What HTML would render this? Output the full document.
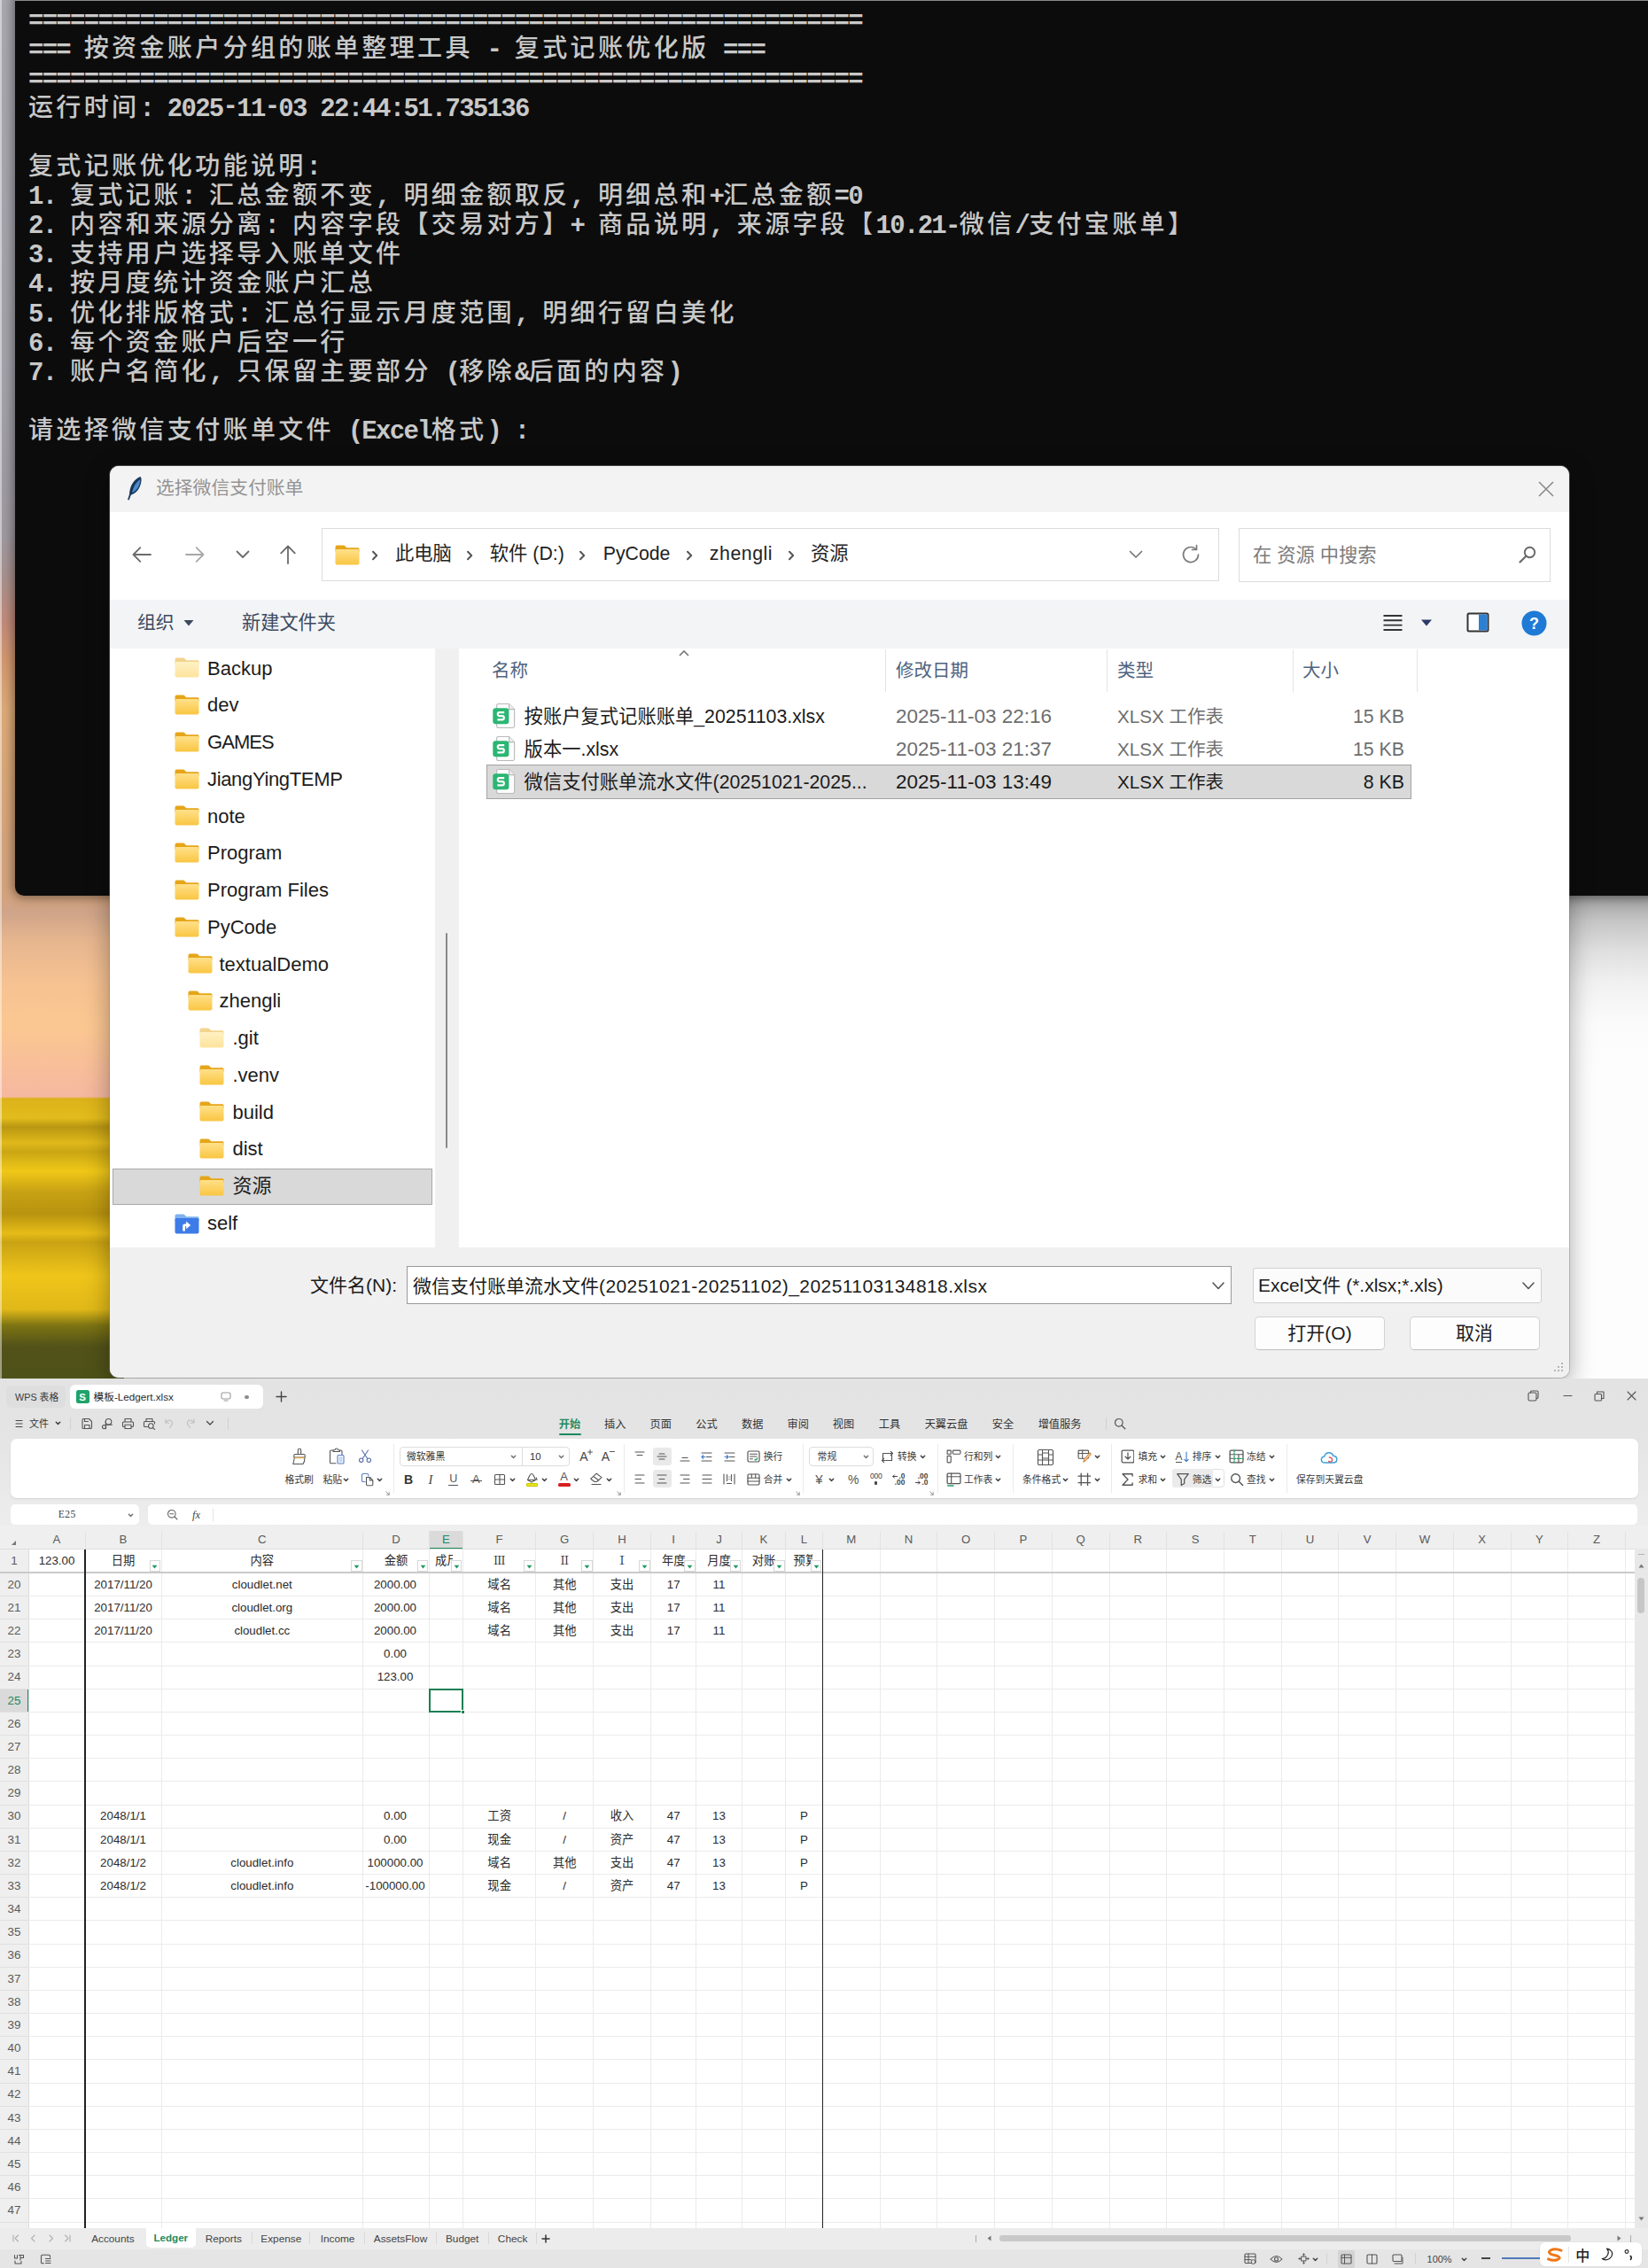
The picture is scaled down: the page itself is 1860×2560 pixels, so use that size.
<!DOCTYPE html><html lang="zh-CN"><head><meta charset="utf-8"><title>screenshot</title><style>
html,body{margin:0;padding:0}body{width:1860px;height:2560px;position:relative;overflow:hidden;background:#fff}

#top{position:absolute;left:0;top:0;width:1860px;height:1556px;overflow:hidden;background:#fdfdfd}
#wall{position:absolute;left:0;top:0;width:140px;height:1557px;
 background:linear-gradient(to bottom,#a9a8b0 0px,#a3a2aa 420px,#9e99a1 600px,#a8918f 650px,#c08a7a 700px,#d29870 745px,#dcaa78 800px,#d9a878 860px,#d4a47c 950px,#d3a37e 1012px,#cfa489 1030px,#e6b68f 1062px,#f6c291 1110px,#fbc791 1160px,#f7bc9b 1215px,#f5b8a0 1238px,#dcb21a 1240px,#e2bc1c 1262px,#b99712 1272px,#e0b91a 1290px,#caa614 1300px,#f0c818 1322px,#c8a214 1345px,#b8940f 1370px,#e6bc18 1392px,#c9a313 1402px,#efc51a 1440px,#e0b818 1478px,#7d7413 1496px,#525219 1520px,#4e5218 1557px)}
#wall:after{content:"";position:absolute;left:0;top:0;width:2px;height:100%;background:rgba(255,255,255,.45)}
#wall2{position:absolute;left:1771px;top:1010px;width:89px;height:547px;background:linear-gradient(to bottom,#9c9c9c 0px,#c6c6c6 30px,#dedede 62px,#f1f1f1 100px,#fbfbfb 145px,#fdfdfd 200px)}
#term{position:absolute;left:17px;top:-10px;width:1853px;height:1021px;background:#0c0c0c;border-radius:10px;box-shadow:0 0 12px 2px rgba(0,0,0,.45)}
.tl{position:absolute;left:32px;height:33px;line-height:33px;white-space:pre;font-family:"Liberation Mono","Noto Sans CJK SC",monospace;font-size:29px;letter-spacing:-1.72px;color:#c8c8c8;font-weight:bold;}
.tl .eq{position:relative;top:0.3px}.tl .hy{position:relative;top:-2.6px}
.tl .tc{font-family:"Noto Sans CJK SC","Liberation Mono",monospace;font-size:28px;letter-spacing:3.36px;font-weight:500;line-height:0;}
#dlg{position:absolute;left:124px;top:526px;width:1647px;height:1029px;background:#fff;border-radius:10px;box-shadow:0 0 0 1px rgba(130,130,130,.4),0 8px 28px rgba(0,0,0,.35);overflow:hidden;font-family:"Liberation Sans","Noto Sans CJK SC",sans-serif;color:#1b1b1b}
#dlg div,#dlg span,#dlg svg{position:absolute}
.dt{white-space:nowrap;line-height:30px;height:30px;font-size:21.5px}


#wps{position:absolute;left:0;top:1556px;width:1860px;height:1004px;background:linear-gradient(to bottom,#e3e3e3 0,#e4e4e4 60px,#ebebeb 140px,#ededed 170px);overflow:hidden;font-family:"Liberation Sans","Noto Sans CJK SC",sans-serif;color:#333}
#wps div,#wps span,#wps svg{position:absolute}
#wps .t{white-space:nowrap;line-height:20px;height:20px;font-size:10.8px;color:#3a3a3a}
#wps .c{white-space:nowrap;line-height:20px;height:20px;font-size:13.3px;color:#2a2a2a;text-align:center}
#wps .rh{white-space:nowrap;line-height:20px;height:20px;font-size:13.4px;color:#5a5a5a;text-align:center;left:0;width:32px}
#wps .ch{white-space:nowrap;line-height:20px;height:20px;font-size:13.2px;color:#5a5a5a;text-align:center}

</style></head><body>

<svg width="0" height="0" style="position:absolute">
<defs>
<linearGradient id="fg1" x1="0" y1="0" x2="0" y2="1"><stop offset="0" stop-color="#ffe08a"/><stop offset="1" stop-color="#f9c642"/></linearGradient>
<linearGradient id="fg2" x1="0" y1="0" x2="0" y2="1"><stop offset="0" stop-color="#fff1c4"/><stop offset="1" stop-color="#fde39c"/></linearGradient>
</defs></svg>

<div id="top">
<div id="wall"></div>
<div id="wall2"></div>
<div id="term"><div style="position:absolute;left:0;top:10px;width:100%;height:1px;background:#8a8a8a"></div>
<div class="tl" style="left:15px;top:17.3px"><span class="eq">============================================================</span></div>
<div class="tl" style="left:15px;top:50.4px"><span class="eq">===</span> <span class="tc">按资金账户分组的账单整理工具</span> - <span class="tc">复式记账优化版</span> <span class="eq">===</span></div>
<div class="tl" style="left:15px;top:83.5px"><span class="eq">============================================================</span></div>
<div class="tl" style="left:15px;top:116.7px"><span class="tc">运行时间</span>: 2025<span class="hy">-</span>11<span class="hy">-</span>03 22:44:51.735136</div>
<div class="tl" style="left:15px;top:182.9px"><span class="tc">复式记账优化功能说明</span>:</div>
<div class="tl" style="left:15px;top:216.0px">1. <span class="tc">复式记账</span>: <span class="tc">汇总金额不变</span>, <span class="tc">明细金额取反</span>, <span class="tc">明细总和</span>+<span class="tc">汇总金额</span><span class="eq">=</span>0</div>
<div class="tl" style="left:15px;top:249.1px">2. <span class="tc">内容和来源分离</span>: <span class="tc">内容字段【交易对方】</span>+ <span class="tc">商品说明</span>, <span class="tc">来源字段【</span>10.21-<span class="tc">微信</span>/<span class="tc">支付宝账单】</span></div>
<div class="tl" style="left:15px;top:282.3px">3. <span class="tc">支持用户选择导入账单文件</span></div>
<div class="tl" style="left:15px;top:315.4px">4. <span class="tc">按月度统计资金账户汇总</span></div>
<div class="tl" style="left:15px;top:348.5px">5. <span class="tc">优化排版格式</span>: <span class="tc">汇总行显示月度范围</span>, <span class="tc">明细行留白美化</span></div>
<div class="tl" style="left:15px;top:381.6px">6. <span class="tc">每个资金账户后空一行</span></div>
<div class="tl" style="left:15px;top:414.7px">7. <span class="tc">账户名简化</span>, <span class="tc">只保留主要部分</span> (<span class="tc">移除</span>&amp;<span class="tc">后面的内容</span>)</div>
<div class="tl" style="left:15px;top:481.0px"><span class="tc">请选择微信支付账单文件</span> (Excel<span class="tc">格式</span>) :</div>
</div>
<div id="dlg"><div style="left:0.0px;top:0.0px;width:1647.0px;height:52.0px;background:#f3f3f3"></div><svg style="left:16.5px;top:9.5px" width="24" height="30" viewBox="0 0 24 30" ><path d="M17.5 2 C10 5 5.5 12 5 22 L3 28 L4.6 28.4 L7 22.5 C13 21 17.5 15 18.5 7 C18.8 4.5 18.3 2.8 17.5 2Z" fill="#1f3d61"/><path d="M16.8 5.2 C12.5 8.5 9.3 13.5 8 20.3 C12.8 18.3 16.3 13.2 17.1 7.3 C17.2 6.3 17.1 5.6 16.8 5.2Z" fill="#4b8acb"/><path d="M16.6 4 C11 8.5 7.6 14.2 6.2 22" stroke="#122a45" stroke-width="1" fill="none"/></svg><span class="dt" style="left:52.0px;top:10.0px;font-size:20.8px;color:#939393">选择微信支付账单</span><svg style="left:1611.0px;top:16.0px" width="20" height="20" viewBox="0 0 20 20" ><path d="M2 2 L18 18 M18 2 L2 18" stroke="#8a8a8a" stroke-width="1.6" fill="none"/></svg><svg style="left:22.0px;top:88.0px" width="28" height="24" viewBox="0 0 28 24" ><path d="M24 12 H4.5 M12.3 4.2 L4.5 12 L12.3 19.8" stroke="#6b6b6b" stroke-width="1.8" fill="none" stroke-linecap="round" stroke-linejoin="round"/></svg><svg style="left:82.0px;top:88.0px" width="28" height="24" viewBox="0 0 28 24" ><path d="M4 12 H23.5 M15.7 4.2 L23.5 12 L15.7 19.8" stroke="#a8a8a8" stroke-width="1.8" fill="none" stroke-linecap="round" stroke-linejoin="round"/></svg><svg style="left:141.0px;top:93.0px" width="18" height="14" viewBox="0 0 18 14" ><path d="M2.5 3.5 L9 10 L15.5 3.5" stroke="#6b6b6b" stroke-width="1.8" fill="none" stroke-linecap="round" stroke-linejoin="round"/></svg><svg style="left:189.0px;top:86.0px" width="24" height="28" viewBox="0 0 24 28" ><path d="M12 24 V4.5 M4.2 12.3 L12 4.5 L19.8 12.3" stroke="#6b6b6b" stroke-width="1.8" fill="none" stroke-linecap="round" stroke-linejoin="round"/></svg><div style="left:239.0px;top:70.0px;width:1013.0px;height:60.0px;box-sizing:border-box;border:1.5px solid #dcdcdc;background:#fff"></div><svg style="left:253.0px;top:87.0px" width="30" height="26" viewBox="0 0 30 26" > <path d="M1.5 4.5 Q1.5 2.6 3.5 2.6 H10.5 Q11.8 2.6 12.6 3.5 L14.2 5.2 H26.5 Q28.5 4.8 28.5 6.8 V10 H1.5Z" fill="#e6a519"/> <path d="M1.5 8.6 Q1.5 7 3.2 7 H26.8 Q28.5 7 28.5 8.6 V22.5 Q28.5 24.5 26.5 24.5 H3.5 Q1.5 24.5 1.5 22.5Z" fill="url(#fg1)"/></svg><svg style="left:294.4px;top:94.0px" width="10" height="14" viewBox="0 0 10 14" ><path d="M3 2.8 L7.2 7 L3 11.2" stroke="#555" stroke-width="2" fill="none" stroke-linecap="round" stroke-linejoin="round"/></svg><svg style="left:401.0px;top:94.0px" width="10" height="14" viewBox="0 0 10 14" ><path d="M3 2.8 L7.2 7 L3 11.2" stroke="#555" stroke-width="2" fill="none" stroke-linecap="round" stroke-linejoin="round"/></svg><svg style="left:528.4px;top:94.0px" width="10" height="14" viewBox="0 0 10 14" ><path d="M3 2.8 L7.2 7 L3 11.2" stroke="#555" stroke-width="2" fill="none" stroke-linecap="round" stroke-linejoin="round"/></svg><svg style="left:648.9px;top:94.0px" width="10" height="14" viewBox="0 0 10 14" ><path d="M3 2.8 L7.2 7 L3 11.2" stroke="#555" stroke-width="2" fill="none" stroke-linecap="round" stroke-linejoin="round"/></svg><svg style="left:764.0px;top:94.0px" width="10" height="14" viewBox="0 0 10 14" ><path d="M3 2.8 L7.2 7 L3 11.2" stroke="#555" stroke-width="2" fill="none" stroke-linecap="round" stroke-linejoin="round"/></svg><span class="dt" style="left:322.0px;top:84.0px;font-size:21.3px;color:#222;letter-spacing:0px">此电脑</span><span class="dt" style="left:428.8px;top:84.0px;font-size:21.3px;color:#222;letter-spacing:0px">软件 (D:)</span><span class="dt" style="left:556.7px;top:84.0px;font-size:21.3px;color:#222;letter-spacing:0px">PyCode</span><span class="dt" style="left:676.8px;top:84.0px;font-size:21.3px;color:#222;letter-spacing:0.55px">zhengli</span><span class="dt" style="left:791.0px;top:84.0px;font-size:21.3px;color:#222;letter-spacing:0px">资源</span><svg style="left:1149.0px;top:94.0px" width="18" height="12" viewBox="0 0 18 12" ><path d="M2.5 2.5 L9 9 L15.5 2.5" stroke="#777" stroke-width="1.7" fill="none" stroke-linecap="round" stroke-linejoin="round"/></svg><svg style="left:1207.0px;top:87.0px" width="26" height="26" viewBox="0 0 26 26" ><path d="M21.5 13 A8.5 8.5 0 1 1 18.2 6.3" stroke="#7a7a7a" stroke-width="1.7" fill="none" stroke-linecap="round"/><path d="M19.5 2.5 V7.5 H14.5" stroke="#7a7a7a" stroke-width="1.7" fill="none" stroke-linecap="round" stroke-linejoin="round"/></svg><div style="left:1274.0px;top:70.0px;width:352.0px;height:60.5px;box-sizing:border-box;border:1.5px solid #dcdcdc;background:#fff"></div><span class="dt" style="left:1290.0px;top:85.5px;font-size:21.3px;color:#7b7b7b">在 资源 中搜索</span><svg style="left:1588.0px;top:88.0px" width="24" height="24" viewBox="0 0 24 24" ><circle cx="14.5" cy="9.5" r="5.7" stroke="#6a6a6a" stroke-width="1.9" fill="none"/><path d="M10.3 13.7 L3.5 20.5" stroke="#6a6a6a" stroke-width="2.2" stroke-linecap="round"/></svg><div style="left:0.0px;top:151.0px;width:1647.0px;height:55.0px;background:#f3f4f6"></div><span class="dt" style="left:31.0px;top:161.5px;font-size:20.8px;color:#3c4a5e">组织</span><svg style="left:82.0px;top:172.0px" width="14" height="10" viewBox="0 0 14 10" ><path d="M1.5 2 H12.5 L7 8.5Z" fill="#3c4a5e"/></svg><span class="dt" style="left:149.0px;top:161.5px;font-size:21.2px;color:#3c4a5e">新建文件夹</span><svg style="left:1436.0px;top:166.0px" width="24" height="22" viewBox="0 0 24 22" ><path d="M1.5 3 H22.5 M1.5 8.3 H22.5 M1.5 13.6 H22.5 M1.5 19 H22.5" stroke="#333" stroke-width="1.9"/></svg><svg style="left:1479.0px;top:172.0px" width="14" height="10" viewBox="0 0 14 10" ><path d="M1 1.5 H13 L7 8.5Z" fill="#2b3a67"/></svg><svg style="left:1531.0px;top:165.0px" width="26" height="23" viewBox="0 0 26 23" ><rect x="1.5" y="1.5" width="23" height="20" rx="1.5" fill="#fff" stroke="#333" stroke-width="2"/><rect x="14" y="2.5" width="9.5" height="18" fill="#2d7fd3"/></svg><svg style="left:1592.5px;top:162.5px" width="29" height="29" viewBox="0 0 29 29" ><circle cx="14.5" cy="14.5" r="14" fill="#1f7ad6"/><text x="14.5" y="21" text-anchor="middle" font-family="Liberation Sans,sans-serif" font-weight="bold" font-size="18" fill="#fff">?</text></svg><div style="left:0.0px;top:206.0px;width:1647.0px;height:676.0px;background:#fff"></div><div style="left:367.0px;top:206.0px;width:26.5px;height:676.0px;background:#f0f0f0"></div><div style="left:379.3px;top:527.0px;width:2.0px;height:243.0px;background:#8a8a8a;border-radius:1px"></div><svg style="left:71.5px;top:214.3px" width="30" height="26" viewBox="0 0 30 26" > <path d="M1.5 4.5 Q1.5 2.6 3.5 2.6 H10.5 Q11.8 2.6 12.6 3.5 L14.2 5.2 H26.5 Q28.5 4.8 28.5 6.8 V10 H1.5Z" fill="#f3d48c"/> <path d="M1.5 8.6 Q1.5 7 3.2 7 H26.8 Q28.5 7 28.5 8.6 V22.5 Q28.5 24.5 26.5 24.5 H3.5 Q1.5 24.5 1.5 22.5Z" fill="url(#fg2)"/></svg><span class="dt" style="left:110.0px;top:213.5px;font-size:22px;color:#1c1c1c;letter-spacing:0px">Backup</span><svg style="left:71.5px;top:256.1px" width="30" height="26" viewBox="0 0 30 26" > <path d="M1.5 4.5 Q1.5 2.6 3.5 2.6 H10.5 Q11.8 2.6 12.6 3.5 L14.2 5.2 H26.5 Q28.5 4.8 28.5 6.8 V10 H1.5Z" fill="#e6a519"/> <path d="M1.5 8.6 Q1.5 7 3.2 7 H26.8 Q28.5 7 28.5 8.6 V22.5 Q28.5 24.5 26.5 24.5 H3.5 Q1.5 24.5 1.5 22.5Z" fill="url(#fg1)"/></svg><span class="dt" style="left:110.0px;top:255.3px;font-size:22px;color:#1c1c1c;letter-spacing:0px">dev</span><svg style="left:71.5px;top:297.8px" width="30" height="26" viewBox="0 0 30 26" > <path d="M1.5 4.5 Q1.5 2.6 3.5 2.6 H10.5 Q11.8 2.6 12.6 3.5 L14.2 5.2 H26.5 Q28.5 4.8 28.5 6.8 V10 H1.5Z" fill="#e6a519"/> <path d="M1.5 8.6 Q1.5 7 3.2 7 H26.8 Q28.5 7 28.5 8.6 V22.5 Q28.5 24.5 26.5 24.5 H3.5 Q1.5 24.5 1.5 22.5Z" fill="url(#fg1)"/></svg><span class="dt" style="left:110.0px;top:297.0px;font-size:22px;color:#1c1c1c;letter-spacing:-0.95px">GAMES</span><svg style="left:71.5px;top:339.6px" width="30" height="26" viewBox="0 0 30 26" > <path d="M1.5 4.5 Q1.5 2.6 3.5 2.6 H10.5 Q11.8 2.6 12.6 3.5 L14.2 5.2 H26.5 Q28.5 4.8 28.5 6.8 V10 H1.5Z" fill="#e6a519"/> <path d="M1.5 8.6 Q1.5 7 3.2 7 H26.8 Q28.5 7 28.5 8.6 V22.5 Q28.5 24.5 26.5 24.5 H3.5 Q1.5 24.5 1.5 22.5Z" fill="url(#fg1)"/></svg><span class="dt" style="left:110.0px;top:338.8px;font-size:22px;color:#1c1c1c;letter-spacing:-0.34px">JiangYingTEMP</span><svg style="left:71.5px;top:381.3px" width="30" height="26" viewBox="0 0 30 26" > <path d="M1.5 4.5 Q1.5 2.6 3.5 2.6 H10.5 Q11.8 2.6 12.6 3.5 L14.2 5.2 H26.5 Q28.5 4.8 28.5 6.8 V10 H1.5Z" fill="#e6a519"/> <path d="M1.5 8.6 Q1.5 7 3.2 7 H26.8 Q28.5 7 28.5 8.6 V22.5 Q28.5 24.5 26.5 24.5 H3.5 Q1.5 24.5 1.5 22.5Z" fill="url(#fg1)"/></svg><span class="dt" style="left:110.0px;top:380.5px;font-size:22px;color:#1c1c1c;letter-spacing:0px">note</span><svg style="left:71.5px;top:423.1px" width="30" height="26" viewBox="0 0 30 26" > <path d="M1.5 4.5 Q1.5 2.6 3.5 2.6 H10.5 Q11.8 2.6 12.6 3.5 L14.2 5.2 H26.5 Q28.5 4.8 28.5 6.8 V10 H1.5Z" fill="#e6a519"/> <path d="M1.5 8.6 Q1.5 7 3.2 7 H26.8 Q28.5 7 28.5 8.6 V22.5 Q28.5 24.5 26.5 24.5 H3.5 Q1.5 24.5 1.5 22.5Z" fill="url(#fg1)"/></svg><span class="dt" style="left:110.0px;top:422.3px;font-size:22px;color:#1c1c1c;letter-spacing:0px">Program</span><svg style="left:71.5px;top:464.9px" width="30" height="26" viewBox="0 0 30 26" > <path d="M1.5 4.5 Q1.5 2.6 3.5 2.6 H10.5 Q11.8 2.6 12.6 3.5 L14.2 5.2 H26.5 Q28.5 4.8 28.5 6.8 V10 H1.5Z" fill="#e6a519"/> <path d="M1.5 8.6 Q1.5 7 3.2 7 H26.8 Q28.5 7 28.5 8.6 V22.5 Q28.5 24.5 26.5 24.5 H3.5 Q1.5 24.5 1.5 22.5Z" fill="url(#fg1)"/></svg><span class="dt" style="left:110.0px;top:464.1px;font-size:22px;color:#1c1c1c;letter-spacing:0px">Program Files</span><svg style="left:71.5px;top:506.6px" width="30" height="26" viewBox="0 0 30 26" > <path d="M1.5 4.5 Q1.5 2.6 3.5 2.6 H10.5 Q11.8 2.6 12.6 3.5 L14.2 5.2 H26.5 Q28.5 4.8 28.5 6.8 V10 H1.5Z" fill="#e6a519"/> <path d="M1.5 8.6 Q1.5 7 3.2 7 H26.8 Q28.5 7 28.5 8.6 V22.5 Q28.5 24.5 26.5 24.5 H3.5 Q1.5 24.5 1.5 22.5Z" fill="url(#fg1)"/></svg><span class="dt" style="left:110.0px;top:505.8px;font-size:22px;color:#1c1c1c;letter-spacing:0px">PyCode</span><svg style="left:86.5px;top:548.4px" width="30" height="26" viewBox="0 0 30 26" > <path d="M1.5 4.5 Q1.5 2.6 3.5 2.6 H10.5 Q11.8 2.6 12.6 3.5 L14.2 5.2 H26.5 Q28.5 4.8 28.5 6.8 V10 H1.5Z" fill="#e6a519"/> <path d="M1.5 8.6 Q1.5 7 3.2 7 H26.8 Q28.5 7 28.5 8.6 V22.5 Q28.5 24.5 26.5 24.5 H3.5 Q1.5 24.5 1.5 22.5Z" fill="url(#fg1)"/></svg><span class="dt" style="left:123.5px;top:547.6px;font-size:22px;color:#1c1c1c;letter-spacing:0px">textualDemo</span><svg style="left:86.5px;top:590.1px" width="30" height="26" viewBox="0 0 30 26" > <path d="M1.5 4.5 Q1.5 2.6 3.5 2.6 H10.5 Q11.8 2.6 12.6 3.5 L14.2 5.2 H26.5 Q28.5 4.8 28.5 6.8 V10 H1.5Z" fill="#e6a519"/> <path d="M1.5 8.6 Q1.5 7 3.2 7 H26.8 Q28.5 7 28.5 8.6 V22.5 Q28.5 24.5 26.5 24.5 H3.5 Q1.5 24.5 1.5 22.5Z" fill="url(#fg1)"/></svg><span class="dt" style="left:123.5px;top:589.3px;font-size:22px;color:#1c1c1c;letter-spacing:0px">zhengli</span><svg style="left:100.0px;top:631.9px" width="30" height="26" viewBox="0 0 30 26" > <path d="M1.5 4.5 Q1.5 2.6 3.5 2.6 H10.5 Q11.8 2.6 12.6 3.5 L14.2 5.2 H26.5 Q28.5 4.8 28.5 6.8 V10 H1.5Z" fill="#f3d48c"/> <path d="M1.5 8.6 Q1.5 7 3.2 7 H26.8 Q28.5 7 28.5 8.6 V22.5 Q28.5 24.5 26.5 24.5 H3.5 Q1.5 24.5 1.5 22.5Z" fill="url(#fg2)"/></svg><span class="dt" style="left:138.5px;top:631.1px;font-size:22px;color:#1c1c1c;letter-spacing:0px">.git</span><svg style="left:100.0px;top:673.7px" width="30" height="26" viewBox="0 0 30 26" > <path d="M1.5 4.5 Q1.5 2.6 3.5 2.6 H10.5 Q11.8 2.6 12.6 3.5 L14.2 5.2 H26.5 Q28.5 4.8 28.5 6.8 V10 H1.5Z" fill="#e6a519"/> <path d="M1.5 8.6 Q1.5 7 3.2 7 H26.8 Q28.5 7 28.5 8.6 V22.5 Q28.5 24.5 26.5 24.5 H3.5 Q1.5 24.5 1.5 22.5Z" fill="url(#fg1)"/></svg><span class="dt" style="left:138.5px;top:672.9px;font-size:22px;color:#1c1c1c;letter-spacing:0px">.venv</span><svg style="left:100.0px;top:715.4px" width="30" height="26" viewBox="0 0 30 26" > <path d="M1.5 4.5 Q1.5 2.6 3.5 2.6 H10.5 Q11.8 2.6 12.6 3.5 L14.2 5.2 H26.5 Q28.5 4.8 28.5 6.8 V10 H1.5Z" fill="#e6a519"/> <path d="M1.5 8.6 Q1.5 7 3.2 7 H26.8 Q28.5 7 28.5 8.6 V22.5 Q28.5 24.5 26.5 24.5 H3.5 Q1.5 24.5 1.5 22.5Z" fill="url(#fg1)"/></svg><span class="dt" style="left:138.5px;top:714.6px;font-size:22px;color:#1c1c1c;letter-spacing:0px">build</span><svg style="left:100.0px;top:757.2px" width="30" height="26" viewBox="0 0 30 26" > <path d="M1.5 4.5 Q1.5 2.6 3.5 2.6 H10.5 Q11.8 2.6 12.6 3.5 L14.2 5.2 H26.5 Q28.5 4.8 28.5 6.8 V10 H1.5Z" fill="#e6a519"/> <path d="M1.5 8.6 Q1.5 7 3.2 7 H26.8 Q28.5 7 28.5 8.6 V22.5 Q28.5 24.5 26.5 24.5 H3.5 Q1.5 24.5 1.5 22.5Z" fill="url(#fg1)"/></svg><span class="dt" style="left:138.5px;top:756.4px;font-size:22px;color:#1c1c1c;letter-spacing:0px">dist</span><div style="left:3.0px;top:793.1px;width:361.0px;height:41.2px;box-sizing:border-box;background:#d9d9d9;border:1.5px solid #a8a8a8"></div><svg style="left:100.0px;top:798.9px" width="30" height="26" viewBox="0 0 30 26" > <path d="M1.5 4.5 Q1.5 2.6 3.5 2.6 H10.5 Q11.8 2.6 12.6 3.5 L14.2 5.2 H26.5 Q28.5 4.8 28.5 6.8 V10 H1.5Z" fill="#e6a519"/> <path d="M1.5 8.6 Q1.5 7 3.2 7 H26.8 Q28.5 7 28.5 8.6 V22.5 Q28.5 24.5 26.5 24.5 H3.5 Q1.5 24.5 1.5 22.5Z" fill="url(#fg1)"/></svg><span class="dt" style="left:138.5px;top:798.1px;font-size:22px;color:#1c1c1c;letter-spacing:0px">资源</span><svg style="left:71.5px;top:841.7px" width="30" height="26" viewBox="0 0 30 26" > <path d="M1.5 4.5 Q1.5 2.6 3.5 2.6 H10.5 Q11.8 2.6 12.6 3.5 L14.2 5.2 H26.5 Q28.5 4.8 28.5 6.8 V10 H1.5Z" fill="#7fb2ee"/> <path d="M1.5 8.6 Q1.5 7 3.2 7 H26.8 Q28.5 7 28.5 8.6 V22.5 Q28.5 24.5 26.5 24.5 H3.5 Q1.5 24.5 1.5 22.5Z" fill="#3d7be8"/> <path d="M10.2 21.5 V15.6 Q10.2 13.6 12.2 13.6 H14.2 V10.6 L19.2 14.9 L14.2 19.2 V16.2 H13 V21.5Z" fill="#fff"/></svg><span class="dt" style="left:110.0px;top:839.9px;font-size:22px;color:#1c1c1c;letter-spacing:0px">self</span><span class="dt" style="left:431.0px;top:215.5px;font-size:20.5px;color:#4f6480">名称</span><span class="dt" style="left:887.0px;top:215.5px;font-size:20.5px;color:#4f6480">修改日期</span><span class="dt" style="left:1137.0px;top:215.5px;font-size:20.5px;color:#4f6480">类型</span><span class="dt" style="left:1346.0px;top:215.5px;font-size:20.5px;color:#4f6480">大小</span><div style="left:875.0px;top:207.0px;width:1.2px;height:48.0px;background:#e4e4e4"></div><div style="left:1124.8px;top:207.0px;width:1.2px;height:48.0px;background:#e4e4e4"></div><div style="left:1334.8px;top:207.0px;width:1.2px;height:48.0px;background:#e4e4e4"></div><div style="left:1474.7px;top:207.0px;width:1.2px;height:48.0px;background:#e4e4e4"></div><svg style="left:641.0px;top:206.0px" width="14" height="10" viewBox="0 0 14 10" ><path d="M2 8 L7 3 L12 8" stroke="#777" stroke-width="1.6" fill="none"/></svg><svg style="left:432.3px;top:267.4px" width="26" height="30" viewBox="0 0 28 32" > <path d="M7 1.5 H20 L26.5 8 V28.5 Q26.5 30.5 24.5 30.5 H7 Q5 30.5 5 28.5 V3.5 Q5 1.5 7 1.5Z" fill="#fdfdfd" stroke="#b9b9b9" stroke-width="1.2"/> <path d="M20 1.5 V8 H26.5" fill="#eee" stroke="#b9b9b9" stroke-width="1.2"/> <rect x="0.3" y="6.5" width="19.5" height="19.5" rx="3.2" fill="#2bb673"/> <path d="M14.2 11.8 H8.3 Q6.2 11.8 6.2 13.9 Q6.2 16.1 8.3 16.1 H11.7 Q13.8 16.1 13.8 18.4 Q13.8 20.7 11.7 20.7 H5.8" fill="none" stroke="#fff" stroke-width="2.3"/></svg><span class="dt" style="left:467.6px;top:268.4px;font-size:21.3px;color:#1b1b1b">按账户复式记账账单_20251103.xlsx</span><span class="dt" style="left:887.0px;top:268.4px;font-size:22.5px;color:#6e6e6e">2025-11-03 22:16</span><span class="dt" style="left:1137.0px;top:268.4px;font-size:20.6px;color:#6e6e6e">XLSX 工作表</span><span class="dt" style="right:186.0px;top:268.4px;font-size:21.3px;color:#6e6e6e">15 KB</span><svg style="left:432.3px;top:304.1px" width="26" height="30" viewBox="0 0 28 32" > <path d="M7 1.5 H20 L26.5 8 V28.5 Q26.5 30.5 24.5 30.5 H7 Q5 30.5 5 28.5 V3.5 Q5 1.5 7 1.5Z" fill="#fdfdfd" stroke="#b9b9b9" stroke-width="1.2"/> <path d="M20 1.5 V8 H26.5" fill="#eee" stroke="#b9b9b9" stroke-width="1.2"/> <rect x="0.3" y="6.5" width="19.5" height="19.5" rx="3.2" fill="#2bb673"/> <path d="M14.2 11.8 H8.3 Q6.2 11.8 6.2 13.9 Q6.2 16.1 8.3 16.1 H11.7 Q13.8 16.1 13.8 18.4 Q13.8 20.7 11.7 20.7 H5.8" fill="none" stroke="#fff" stroke-width="2.3"/></svg><span class="dt" style="left:467.6px;top:305.1px;font-size:21.3px;color:#1b1b1b">版本一.xlsx</span><span class="dt" style="left:887.0px;top:305.1px;font-size:22.5px;color:#6e6e6e">2025-11-03 21:37</span><span class="dt" style="left:1137.0px;top:305.1px;font-size:20.6px;color:#6e6e6e">XLSX 工作表</span><span class="dt" style="right:186.0px;top:305.1px;font-size:21.3px;color:#6e6e6e">15 KB</span><div style="left:425.0px;top:337.0px;width:1044.0px;height:38.5px;box-sizing:border-box;background:#d9d9d9;border:1.5px solid #a3a3a3"></div><svg style="left:432.3px;top:340.8px" width="26" height="30" viewBox="0 0 28 32" > <path d="M7 1.5 H20 L26.5 8 V28.5 Q26.5 30.5 24.5 30.5 H7 Q5 30.5 5 28.5 V3.5 Q5 1.5 7 1.5Z" fill="#fdfdfd" stroke="#b9b9b9" stroke-width="1.2"/> <path d="M20 1.5 V8 H26.5" fill="#eee" stroke="#b9b9b9" stroke-width="1.2"/> <rect x="0.3" y="6.5" width="19.5" height="19.5" rx="3.2" fill="#2bb673"/> <path d="M14.2 11.8 H8.3 Q6.2 11.8 6.2 13.9 Q6.2 16.1 8.3 16.1 H11.7 Q13.8 16.1 13.8 18.4 Q13.8 20.7 11.7 20.7 H5.8" fill="none" stroke="#fff" stroke-width="2.3"/></svg><span class="dt" style="left:467.6px;top:341.8px;font-size:21.3px;color:#1b1b1b">微信支付账单流水文件(20251021-2025...</span><span class="dt" style="left:887.0px;top:341.8px;font-size:22.5px;color:#1b1b1b">2025-11-03 13:49</span><span class="dt" style="left:1137.0px;top:341.8px;font-size:20.6px;color:#1b1b1b">XLSX 工作表</span><span class="dt" style="right:186.0px;top:341.8px;font-size:21.3px;color:#1b1b1b">8 KB</span><div style="left:0.0px;top:882.0px;width:1647.0px;height:147.0px;background:#f0f0f0"></div><span class="dt" style="left:226.0px;top:910.0px;font-size:21px;color:#1b1b1b">文件名(N):</span><div style="left:335.0px;top:903.0px;width:931.0px;height:43.0px;box-sizing:border-box;border:1.5px solid #9a9a9a;background:#fff"></div><span class="dt" style="left:342.0px;top:910.5px;font-size:21px;color:#1b1b1b">微信支付账单流水文件<span style="position:static;letter-spacing:.42px">(20251021-20251102)_20251103134818.xlsx</span></span><svg style="left:1243.0px;top:920.0px" width="16" height="11" viewBox="0 0 16 11" ><path d="M2 2 L8 8.5 L14 2" stroke="#555" stroke-width="1.6" fill="none" stroke-linecap="round" stroke-linejoin="round"/></svg><div style="left:1290.0px;top:905.0px;width:326.0px;height:40.0px;box-sizing:border-box;border:1.5px solid #d0d0d0;background:#fbfbfb;border-radius:3px"></div><span class="dt" style="left:1296.0px;top:909.5px;font-size:21px;color:#1b1b1b">Excel文件 (*.xlsx;*.xls)</span><svg style="left:1593.0px;top:920.0px" width="16" height="11" viewBox="0 0 16 11" ><path d="M2 2 L8 8.5 L14 2" stroke="#555" stroke-width="1.6" fill="none" stroke-linecap="round" stroke-linejoin="round"/></svg><div style="left:1292.0px;top:960.0px;width:147.0px;height:38.0px;box-sizing:border-box;border:1.5px solid #d2d2d2;border-bottom-color:#bdbdbd;background:#fdfdfd;border-radius:5px"></div><div style="left:1466.5px;top:960.0px;width:147.0px;height:38.0px;box-sizing:border-box;border:1.5px solid #d2d2d2;border-bottom-color:#bdbdbd;background:#fdfdfd;border-radius:5px"></div><span class="dt" style="left:1292.0px;top:963.5px;width:147px;text-align:center;font-size:21px">打开(O)</span><span class="dt" style="left:1466.5px;top:963.5px;width:147px;text-align:center;font-size:21px">取消</span><svg style="left:1628.0px;top:1010.0px" width="14" height="14" viewBox="0 0 14 14" ><g fill="#b5b5b5"><rect x="10" y="2" width="2" height="2"/><rect x="6" y="6" width="2" height="2"/><rect x="10" y="6" width="2" height="2"/><rect x="2" y="10" width="2" height="2"/><rect x="6" y="10" width="2" height="2"/><rect x="10" y="10" width="2" height="2"/></g></svg></div>
</div>
<div id="wps"><div style="left:7.0px;top:7.5px;width:67.0px;height:25.5px;background:#dedede;border-radius:5px"></div><span class="t" style="left:17.0px;top:10.5px;font-size:10.8px;color:#3a3a3a">WPS 表格</span><div style="left:78.5px;top:7.0px;width:218.0px;height:26.5px;background:#fff;border-radius:6px"></div><div style="left:85.6px;top:13.3px;width:15.0px;height:15.0px;background:#1fa36a;border-radius:2.5px"></div><span class="t" style="left:83.1px;top:10.6px;width:20px;text-align:center;font-size:11.5px;font-weight:bold;color:#fff">S</span><span class="t" style="left:105.6px;top:10.5px;font-size:11.7px;color:#2c2c2c">模板-Ledgert.xlsx</span><svg style="left:249.0px;top:15.0px" width="12.00" height="11.00" viewBox="0 0 12 11" fill="none" stroke-linecap="round" stroke-linejoin="round"><rect x="1" y="1" width="10" height="7" rx="1.5" stroke="#9a9a9a" stroke-width="1.1"/><path d="M4 10 H8" stroke="#9a9a9a" stroke-width="1.1"/></svg><div style="left:276.0px;top:18.5px;width:4.6px;height:4.6px;background:#8c8c8c;border-radius:50%"></div><svg style="left:311.2px;top:14.0px" width="13.00" height="13.00" viewBox="0 0 13 13" fill="none" stroke-linecap="round" stroke-linejoin="round"><path d="M6.5 1 V12 M1 6.5 H12" stroke="#444" stroke-width="1.4"/></svg><svg style="left:1723.5px;top:13.2px" width="13.00" height="13.00" viewBox="0 0 13 13" fill="none" stroke-linecap="round" stroke-linejoin="round"><rect x="1" y="3" width="9" height="9" rx="1.5" stroke="#555" stroke-width="1.1"/><path d="M3.5 3 V2.2 Q3.5 1 4.7 1 H10.8 Q12 1 12 2.2 V8.3 Q12 9.5 10.8 9.5 H10" stroke="#555" stroke-width="1.1"/></svg><svg style="left:1763.5px;top:18.2px" width="11.00" height="3.00" viewBox="0 0 11 3" fill="none" stroke-linecap="round" stroke-linejoin="round"><path d="M1 1.5 H10" stroke="#555" stroke-width="1.1"/></svg><svg style="left:1799.0px;top:13.7px" width="12.00" height="12.00" viewBox="0 0 12 12" fill="none" stroke-linecap="round" stroke-linejoin="round"><rect x="1" y="3.5" width="7.5" height="7.5" rx="1" stroke="#555" stroke-width="1.1"/><path d="M3.5 3.5 V1 H11 V8.5 H8.5" stroke="#555" stroke-width="1.1"/></svg><svg style="left:1836.0px;top:14.2px" width="11.00" height="11.00" viewBox="0 0 11 11" fill="none" stroke-linecap="round" stroke-linejoin="round"><path d="M1 1 L10 10 M10 1 L1 10" stroke="#555" stroke-width="1.1"/></svg><svg style="left:17.2px;top:45.6px" width="9.00" height="10.00" viewBox="0 0 9 10" fill="none" stroke-linecap="round" stroke-linejoin="round"><path d="M1 1.5 H8 M1 5 H8 M1 8.5 H8" stroke="#444" stroke-width="1.1"/></svg><span class="t" style="left:33.0px;top:40.6px;font-size:11px;color:#333">文件</span><svg style="left:61.5px;top:48.1px" width="7.00" height="5.00" viewBox="0 0 7 5" fill="none" stroke-linecap="round" stroke-linejoin="round"><path d="M1.3 1.2 L3.5 3.4 L5.7 1.2" stroke="#444" stroke-width="1.5"/></svg><div style="left:79.4px;top:43.5px;width:1.0px;height:14.0px;background:#d2d2d2"></div><svg style="left:91.0px;top:43.6px" width="14.00" height="14.00" viewBox="0 0 14 14" fill="none" stroke-linecap="round" stroke-linejoin="round"><path d="M2 2.8 Q2 1.5 3.3 1.5 H9.5 L12.5 4.5 V11.2 Q12.5 12.5 11.2 12.5 H3.3 Q2 12.5 2 11.2Z M4.5 12.3 V8.5 H10 V12.3 M4.5 1.8 V4.5 H8.5" stroke="#555" stroke-width="1.1"/></svg><svg style="left:114.0px;top:43.6px" width="14.00" height="14.00" viewBox="0 0 14 14" fill="none" stroke-linecap="round" stroke-linejoin="round"><circle cx="8.5" cy="4.8" r="3.3" stroke="#555" stroke-width="1.1"/><circle cx="3.6" cy="10.6" r="2.1" stroke="#555" stroke-width="1.1"/><path d="M5.3 4.8 V12.6 M5.5 8.3 H12.5" stroke="#555" stroke-width="1.1"/></svg><svg style="left:136.9px;top:43.6px" width="15.00" height="14.00" viewBox="0 0 15 14" fill="none" stroke-linecap="round" stroke-linejoin="round"><path d="M4 5 V1.5 H11 V5 M4 10.5 H2.5 Q1.5 10.5 1.5 9.5 V6 Q1.5 5 2.5 5 H12.5 Q13.5 5 13.5 6 V9.5 Q13.5 10.5 12.5 10.5 H11 M4 8.3 H11 V12.5 H4Z" stroke="#555" stroke-width="1.1"/></svg><svg style="left:160.5px;top:43.6px" width="15.00" height="14.00" viewBox="0 0 15 14" fill="none" stroke-linecap="round" stroke-linejoin="round"><path d="M4 4.5 V1.5 H11 V4.5 M5.5 10.5 H2.5 Q1.5 10.5 1.5 9.5 V5.5 Q1.5 4.5 2.5 4.5 H12.5 Q13.5 4.5 13.5 5.5 V7" stroke="#555" stroke-width="1.1"/><circle cx="9.3" cy="9.5" r="2.8" stroke="#555" stroke-width="1.1"/><path d="M11.4 11.6 L13.6 13.4" stroke="#555" stroke-width="1.2"/></svg><svg style="left:184.8px;top:44.1px" width="12.00" height="13.00" viewBox="0 0 12 13" fill="none" stroke-linecap="round" stroke-linejoin="round"><path d="M2 2 V6 H6 M2.3 5.8 Q5 1.8 8.2 3.6 Q11.5 6 6.5 11.5" stroke="#bdbdbd" stroke-width="1.1"/></svg><svg style="left:208.6px;top:44.1px" width="12.00" height="13.00" viewBox="0 0 12 13" fill="none" stroke-linecap="round" stroke-linejoin="round"><path d="M10 2 V6 H6 M9.7 5.8 Q7 1.8 3.8 3.6 Q0.5 6 5.5 11.5" stroke="#bdbdbd" stroke-width="1.1"/></svg><svg style="left:232.0px;top:47.1px" width="10.00" height="7.00" viewBox="0 0 10 7" fill="none" stroke-linecap="round" stroke-linejoin="round"><path d="M1.5 1.5 L5 5 L8.5 1.5" stroke="#444" stroke-width="1.2"/></svg><div style="left:256.9px;top:43.5px;width:1.0px;height:14.0px;background:#d2d2d2"></div><span class="t" style="left:543.0px;top:42.4px;width:200px;text-align:center;font-size:12.2px;font-weight:bold;color:#1e8a5e">开始</span><div style="left:630.5px;top:61.6px;width:25.0px;height:2.0px;background:#1e8a5e;border-radius:1px"></div><span class="t" style="left:594.3px;top:42.4px;width:200px;text-align:center;font-size:12.2px;color:#333">插入</span><span class="t" style="left:645.8px;top:42.4px;width:200px;text-align:center;font-size:12.2px;color:#333">页面</span><span class="t" style="left:697.4px;top:42.4px;width:200px;text-align:center;font-size:12.2px;color:#333">公式</span><span class="t" style="left:749.3px;top:42.4px;width:200px;text-align:center;font-size:12.2px;color:#333">数据</span><span class="t" style="left:800.8px;top:42.4px;width:200px;text-align:center;font-size:12.2px;color:#333">审阅</span><span class="t" style="left:852.0px;top:42.4px;width:200px;text-align:center;font-size:12.2px;color:#333">视图</span><span class="t" style="left:904.0px;top:42.4px;width:200px;text-align:center;font-size:12.2px;color:#333">工具</span><span class="t" style="left:968.0px;top:42.4px;width:200px;text-align:center;font-size:12.2px;color:#333">天翼云盘</span><span class="t" style="left:1032.0px;top:42.4px;width:200px;text-align:center;font-size:12.2px;color:#333">安全</span><span class="t" style="left:1096.0px;top:42.4px;width:200px;text-align:center;font-size:12.2px;color:#333">增值服务</span><div style="left:1248.0px;top:44.0px;width:1.0px;height:14.0px;background:#d2d2d2"></div><svg style="left:1257.0px;top:44.0px" width="14.00" height="14.00" viewBox="0 0 14 14" fill="none" stroke-linecap="round" stroke-linejoin="round"><circle cx="5.8" cy="5.8" r="4.3" stroke="#555" stroke-width="1.2"/><path d="M9 9 L12.8 12.8" stroke="#555" stroke-width="1.3"/></svg><div style="left:11.5px;top:68.0px;width:1837.0px;height:66.5px;background:#fff;border-radius:7px;box-shadow:0 1px 2px rgba(0,0,0,.10)"></div><svg style="left:328.6px;top:78.0px" width="18.00" height="20.00" viewBox="0 0 18 20" fill="none" stroke-linecap="round" stroke-linejoin="round"><path d="M7.3 7.5 V3 Q7.3 1.3 9 1.3 Q10.7 1.3 10.7 3 V7.5 M4 7.5 H14 Q15.2 7.5 15.2 8.7 V11 H2.8 V8.7 Q2.8 7.5 4 7.5Z M3.5 11 L1.8 18.5 H13 Q15 16 15 11" stroke="#555" stroke-width="1.1"/><path d="M4 11.5 H14" stroke="#e8b15a" stroke-width="1.3"/></svg><span class="t" style="left:237.6px;top:103.6px;width:200px;text-align:center;">格式刷</span><svg style="left:370.0px;top:78.0px" width="20.00" height="20.00" viewBox="0 0 20 20" fill="none" stroke-linecap="round" stroke-linejoin="round"><path d="M6 3 H3.8 Q2.5 3 2.5 4.3 V16.5 Q2.5 17.8 3.8 17.8 H9 M13.5 3 H14.7 Q16 3 16 4.3 V7.5 M6 4.5 V2.8 H8 Q8.2 1 9.7 1 Q11.3 1 11.5 2.8 H13.5 V4.5Z" stroke="#555" stroke-width="1.1"/><rect x="11" y="8.5" width="7" height="9.5" rx="1" stroke="#5b7fc4" stroke-width="1.1"/><rect x="12.6" y="10" width="3.8" height="6.5" fill="#c8d6f0"/></svg><span class="t" style="left:364.5px;top:103.6px;">粘贴</span><svg style="left:387.0px;top:111.6px" width="7.00" height="5.00" viewBox="0 0 7 5" fill="none" stroke-linecap="round" stroke-linejoin="round"><path d="M1.3 1.2 L3.5 3.4 L5.7 1.2" stroke="#444" stroke-width="1.5"/></svg><svg style="left:404.0px;top:79.5px" width="16.00" height="16.00" viewBox="0 0 16 16" fill="none" stroke-linecap="round" stroke-linejoin="round"><path d="M4.5 1 L10.8 10.5 M11.5 1 L5.2 10.5" stroke="#5a6fb0" stroke-width="1.1"/><circle cx="3.7" cy="12.2" r="2.2" stroke="#5a6fb0" stroke-width="1.1"/><circle cx="12.3" cy="12.2" r="2.2" stroke="#5a6fb0" stroke-width="1.1"/></svg><svg style="left:406.5px;top:105.6px" width="16.00" height="16.00" viewBox="0 0 16 16" fill="none" stroke-linecap="round" stroke-linejoin="round"><path d="M5 10.5 H2.8 Q1.5 10.5 1.5 9.2 V2.8 Q1.5 1.5 2.8 1.5 H7.5 Q8.8 1.5 8.8 2.8 V4" stroke="#5b7fc4" stroke-width="1.1"/><path d="M6.5 5.5 H10.5 L13.8 8.8 V13.5 Q13.8 14.7 12.6 14.7 H7.7 Q6.5 14.7 6.5 13.5Z M10.3 5.7 V9 H13.6" stroke="#555" stroke-width="1.1"/></svg><svg style="left:425.0px;top:111.6px" width="7.00" height="5.00" viewBox="0 0 7 5" fill="none" stroke-linecap="round" stroke-linejoin="round"><path d="M1.3 1.2 L3.5 3.4 L5.7 1.2" stroke="#444" stroke-width="1.5"/></svg><svg style="left:435.2px;top:126.5px" width="5.00" height="5.00" viewBox="0 0 5 5" fill="none" stroke-linecap="round" stroke-linejoin="round"><path d="M0.8 0.8 L4.2 4.2 M4.2 1.6 V4.2 H1.6" stroke="#888" stroke-width="0.9"/></svg><div style="left:443.7px;top:74.0px;width:1.0px;height:55.0px;background:#ebebeb"></div><div style="left:450.5px;top:77.0px;width:192.5px;height:22.0px;box-sizing:border-box;border:1px solid #dcdcdc;border-radius:4px;background:#fff"></div><div style="left:588.6px;top:77.5px;width:1.0px;height:21.0px;background:#dcdcdc"></div><span class="t" style="left:459.0px;top:78.0px;font-size:10.8px;color:#333">微软雅黑</span><svg style="left:575.5px;top:86.0px" width="7.00" height="5.00" viewBox="0 0 7 5" fill="none" stroke-linecap="round" stroke-linejoin="round"><path d="M1.3 1.2 L3.5 3.4 L5.7 1.2" stroke="#777" stroke-width="1.5"/></svg><span class="t" style="left:598.0px;top:78.0px;font-size:11.3px;color:#333">10</span><svg style="left:629.5px;top:86.0px" width="7.00" height="5.00" viewBox="0 0 7 5" fill="none" stroke-linecap="round" stroke-linejoin="round"><path d="M1.3 1.2 L3.5 3.4 L5.7 1.2" stroke="#777" stroke-width="1.5"/></svg><span class="t" style="left:649.0px;top:78.0px;width:20px;text-align:center;font-size:14px;color:#444">A</span><svg style="left:663.0px;top:80.0px" width="6.00" height="6.00" viewBox="0 0 6 6" fill="none" stroke-linecap="round" stroke-linejoin="round"><path d="M3 0.5 V5.5 M0.5 3 H5.5" stroke="#444" stroke-width="0.9"/></svg><span class="t" style="left:673.5px;top:78.0px;width:20px;text-align:center;font-size:14px;color:#444">A</span><svg style="left:687.5px;top:81.0px" width="6.00" height="3.00" viewBox="0 0 6 3" fill="none" stroke-linecap="round" stroke-linejoin="round"><path d="M0.5 1.5 H5.5" stroke="#444" stroke-width="0.9"/></svg><span class="t" style="left:451.0px;top:103.6px;width:20px;text-align:center;font-size:14px;font-weight:bold;color:#333">B</span><span class="t" style="left:476.0px;top:103.6px;width:20px;text-align:center;font-size:14.5px;font-style:italic;font-family:Liberation Serif,serif;color:#444">I</span><span class="t" style="left:501.8px;top:102.6px;width:20px;text-align:center;font-size:12.5px;color:#555">U</span><div style="left:506.3px;top:120.3px;width:11.0px;height:1.0px;background:#555"></div><span class="t" style="left:527.4px;top:103.6px;width:20px;text-align:center;font-size:13px;color:#555">A</span><div style="left:531.0px;top:114.5px;width:13.0px;height:1.0px;background:#555"></div><svg style="left:556.7px;top:106.6px" width="14.00" height="14.00" viewBox="0 0 14 14" fill="none" stroke-linecap="round" stroke-linejoin="round"><rect x="1.5" y="1.5" width="11" height="11" rx="1" stroke="#555" stroke-width="1.1"/><path d="M7 1.5 V12.5 M1.5 7 H12.5" stroke="#555" stroke-width="1.1"/></svg><svg style="left:574.9px;top:111.6px" width="7.00" height="5.00" viewBox="0 0 7 5" fill="none" stroke-linecap="round" stroke-linejoin="round"><path d="M1.3 1.2 L3.5 3.4 L5.7 1.2" stroke="#444" stroke-width="1.5"/></svg><svg style="left:593.2px;top:104.6px" width="14.00" height="13.00" viewBox="0 0 14 13" fill="none" stroke-linecap="round" stroke-linejoin="round"><path d="M4.5 5 Q7 0 9.5 5 L11.5 9.5 H2.5Z M2.5 9.5 L7 12 L11.5 9.5" stroke="#555" stroke-width="1.1"/><path d="M12.3 7 L13 9.5" stroke="#555" stroke-width="1.1"/></svg><div style="left:593.5px;top:118.2px;width:13.5px;height:3.6px;background:#e8e61a;border-radius:1px;border:0.5px solid #c9c400;box-sizing:border-box"></div><svg style="left:611.0px;top:111.6px" width="7.00" height="5.00" viewBox="0 0 7 5" fill="none" stroke-linecap="round" stroke-linejoin="round"><path d="M1.3 1.2 L3.5 3.4 L5.7 1.2" stroke="#444" stroke-width="1.5"/></svg><span class="t" style="left:626.7px;top:101.1px;width:20px;text-align:center;font-size:13px;color:#555">A</span><div style="left:629.8px;top:118.2px;width:14.0px;height:3.8px;background:#d81e1e;border-radius:1.5px"></div><svg style="left:647.1px;top:111.6px" width="7.00" height="5.00" viewBox="0 0 7 5" fill="none" stroke-linecap="round" stroke-linejoin="round"><path d="M1.3 1.2 L3.5 3.4 L5.7 1.2" stroke="#444" stroke-width="1.5"/></svg><svg style="left:665.2px;top:106.1px" width="16.00" height="15.00" viewBox="0 0 16 15" fill="none" stroke-linecap="round" stroke-linejoin="round"><path d="M6 10.5 L1.8 7.2 L8.2 1.2 L14 5.6 L8.5 10.5Z M4.8 4.5 L10.8 9" stroke="#555" stroke-width="1.1"/><path d="M3 13.5 H13" stroke="#555" stroke-width="1.1"/></svg><svg style="left:683.6px;top:111.6px" width="7.00" height="5.00" viewBox="0 0 7 5" fill="none" stroke-linecap="round" stroke-linejoin="round"><path d="M1.3 1.2 L3.5 3.4 L5.7 1.2" stroke="#444" stroke-width="1.5"/></svg><svg style="left:696.3px;top:126.5px" width="5.00" height="5.00" viewBox="0 0 5 5" fill="none" stroke-linecap="round" stroke-linejoin="round"><path d="M0.8 0.8 L4.2 4.2 M4.2 1.6 V4.2 H1.6" stroke="#888" stroke-width="0.9"/></svg><div style="left:704.4px;top:74.0px;width:1.0px;height:55.0px;background:#ebebeb"></div><div style="left:737.0px;top:77.6px;width:20.8px;height:20.4px;background:#e9e9e9;border-radius:3px"></div><div style="left:737.0px;top:103.0px;width:20.8px;height:20.4px;background:#e9e9e9;border-radius:3px"></div><svg style="left:716.0px;top:82.4px" width="12.00" height="6.00" viewBox="0 0 12 6" fill="none" stroke-linecap="round" stroke-linejoin="round"><path d="M1 1 H11 M3 4.5 H9" stroke="#555" stroke-width="1.1"/></svg><svg style="left:741.3px;top:84.4px" width="12.00" height="8.00" viewBox="0 0 12 8" fill="none" stroke-linecap="round" stroke-linejoin="round"><path d="M3 1 H9 M1 4 H11 M3 7 H9" stroke="#555" stroke-width="1.1"/></svg><svg style="left:766.9px;top:88.4px" width="12.00" height="6.00" viewBox="0 0 12 6" fill="none" stroke-linecap="round" stroke-linejoin="round"><path d="M3 1.5 H9 M1 5 H11" stroke="#555" stroke-width="1.1"/></svg><svg style="left:791.2px;top:82.9px" width="13.00" height="11.00" viewBox="0 0 13 11" fill="none" stroke-linecap="round" stroke-linejoin="round"><path d="M1 1 H12 M6.5 5.5 H12 M1 10 H12" stroke="#555" stroke-width="1.1"/><path d="M5 5.5 H1 M2.8 3.7 L1 5.5 L2.8 7.3" stroke="#3f78c8" stroke-width="1.1"/></svg><svg style="left:816.8px;top:82.9px" width="13.00" height="11.00" viewBox="0 0 13 11" fill="none" stroke-linecap="round" stroke-linejoin="round"><path d="M1 1 H12 M6.5 5.5 H12 M1 10 H12" stroke="#555" stroke-width="1.1"/><path d="M1 5.5 H5 M3.2 3.7 L5 5.5 L3.2 7.3" stroke="#3f78c8" stroke-width="1.1"/></svg><svg style="left:842.9px;top:81.4px" width="15.00" height="14.00" viewBox="0 0 15 14" fill="none" stroke-linecap="round" stroke-linejoin="round"><rect x="1" y="1" width="13" height="12" rx="1.4" stroke="#555" stroke-width="1.2"/><path d="M3.5 4.3 H11.5 M3.5 7 H11 M3.5 9.8 H6.5" stroke="#555" stroke-width="1.05"/><path d="M11.6 8.4 V10.6 H9 M10 9.5 L9 10.6 L10 11.7" stroke="#2a9d6a" stroke-width="0.95"/></svg><span class="t" style="left:861.7px;top:78.4px;">换行</span><svg style="left:716.0px;top:108.1px" width="12.00" height="11.00" viewBox="0 0 12 11" fill="none" stroke-linecap="round" stroke-linejoin="round"><path d="M1 1 H11 M1 5.5 H7.5 M1 10 H11" stroke="#555" stroke-width="1.1"/></svg><svg style="left:741.3px;top:108.1px" width="12.00" height="11.00" viewBox="0 0 12 11" fill="none" stroke-linecap="round" stroke-linejoin="round"><path d="M1 1 H11 M3 5.5 H9 M1 10 H11" stroke="#555" stroke-width="1.1"/></svg><svg style="left:766.9px;top:108.1px" width="12.00" height="11.00" viewBox="0 0 12 11" fill="none" stroke-linecap="round" stroke-linejoin="round"><path d="M1 1 H11 M4.5 5.5 H11 M1 10 H11" stroke="#555" stroke-width="1.1"/></svg><svg style="left:791.7px;top:108.1px" width="12.00" height="11.00" viewBox="0 0 12 11" fill="none" stroke-linecap="round" stroke-linejoin="round"><path d="M1 1 H11 M1 5.5 H11 M1 10 H11" stroke="#555" stroke-width="1.1"/></svg><svg style="left:816.3px;top:107.1px" width="14.00" height="13.00" viewBox="0 0 14 13" fill="none" stroke-linecap="round" stroke-linejoin="round"><path d="M1 1 V12 M13 1 V12 M4.5 11.5 H9.5 M4.5 1.5 V8.5 M9.5 1.5 V8.5" stroke="#555" stroke-width="1.1"/><path d="M4.5 4 H9.5 M4.5 6.5 H9.5" stroke="#999" stroke-width="0.8"/></svg><svg style="left:842.9px;top:106.6px" width="15.00" height="14.00" viewBox="0 0 15 14" fill="none" stroke-linecap="round" stroke-linejoin="round"><rect x="1" y="1" width="13" height="12" rx="1.4" stroke="#555" stroke-width="1.2"/><path d="M1 5.2 H14 M5.3 1 V5.2 M9.7 1 V5.2 M1 9 H14" stroke="#555" stroke-width="1.1"/></svg><span class="t" style="left:861.7px;top:103.6px;">合并</span><svg style="left:886.5px;top:111.6px" width="7.00" height="5.00" viewBox="0 0 7 5" fill="none" stroke-linecap="round" stroke-linejoin="round"><path d="M1.3 1.2 L3.5 3.4 L5.7 1.2" stroke="#444" stroke-width="1.5"/></svg><svg style="left:897.5px;top:126.5px" width="5.00" height="5.00" viewBox="0 0 5 5" fill="none" stroke-linecap="round" stroke-linejoin="round"><path d="M0.8 0.8 L4.2 4.2 M4.2 1.6 V4.2 H1.6" stroke="#888" stroke-width="0.9"/></svg><div style="left:905.7px;top:74.0px;width:1.0px;height:55.0px;background:#ebebeb"></div><div style="left:913.0px;top:77.0px;width:73.0px;height:22.0px;box-sizing:border-box;border:1px solid #dcdcdc;border-radius:4px;background:#fff"></div><span class="t" style="left:922.6px;top:78.0px;">常规</span><svg style="left:974.4px;top:86.0px" width="7.00" height="5.00" viewBox="0 0 7 5" fill="none" stroke-linecap="round" stroke-linejoin="round"><path d="M1.3 1.2 L3.5 3.4 L5.7 1.2" stroke="#777" stroke-width="1.5"/></svg><svg style="left:993.1px;top:80.9px" width="17.00" height="15.00" viewBox="0 0 17 15" fill="none" stroke-linecap="round" stroke-linejoin="round"><path d="M3.5 10 V3.5 H14.5 M12.3 1.3 L14.5 3.5 L12.3 5.7 M13.5 5.5 V11.5 H2.5 M4.7 9.3 L2.5 11.5 L4.7 13.7" stroke="#555" stroke-width="1.2"/></svg><span class="t" style="left:1012.9px;top:78.4px;">转换</span><svg style="left:1038.0px;top:86.4px" width="7.00" height="5.00" viewBox="0 0 7 5" fill="none" stroke-linecap="round" stroke-linejoin="round"><path d="M1.3 1.2 L3.5 3.4 L5.7 1.2" stroke="#444" stroke-width="1.5"/></svg><span class="t" style="left:914.5px;top:103.6px;width:20px;text-align:center;font-size:15px;color:#555">¥</span><svg style="left:935.3px;top:111.6px" width="7.00" height="5.00" viewBox="0 0 7 5" fill="none" stroke-linecap="round" stroke-linejoin="round"><path d="M1.3 1.2 L3.5 3.4 L5.7 1.2" stroke="#444" stroke-width="1.5"/></svg><span class="t" style="left:953.2px;top:103.6px;width:20px;text-align:center;font-size:14px;color:#555">%</span><span class="t" style="left:976.8px;top:100.1px;width:24px;text-align:center;font-size:8.6px;color:#444;letter-spacing:-0.3px">000</span><div style="left:987.4px;top:115.6px;width:2.4px;height:4.0px;background:#444;border-radius:1.2px"></div><span class="t" style="left:1008.0px;top:100.3px;width:20px;text-align:center;font-size:8.4px;color:#444;font-weight:bold">.0</span><span class="t" style="left:1005.5px;top:107.3px;width:20px;text-align:center;font-size:8.4px;color:#444;font-weight:bold">.00</span><svg style="left:1006.5px;top:108.1px" width="6.00" height="5.00" viewBox="0 0 6 5" fill="none" stroke-linecap="round" stroke-linejoin="round"><path d="M5.5 2.5 H0.8 M2.5 0.8 L0.8 2.5 L2.5 4.2" stroke="#444" stroke-width="1"/></svg><span class="t" style="left:1031.5px;top:100.3px;width:20px;text-align:center;font-size:8.4px;color:#444;font-weight:bold">.00</span><span class="t" style="left:1034.0px;top:107.3px;width:20px;text-align:center;font-size:8.4px;color:#444;font-weight:bold">.0</span><svg style="left:1032.5px;top:114.9px" width="6.00" height="5.00" viewBox="0 0 6 5" fill="none" stroke-linecap="round" stroke-linejoin="round"><path d="M0.5 2.5 H5.2 M3.5 0.8 L5.2 2.5 L3.5 4.2" stroke="#444" stroke-width="1"/></svg><svg style="left:1049.1px;top:126.5px" width="5.00" height="5.00" viewBox="0 0 5 5" fill="none" stroke-linecap="round" stroke-linejoin="round"><path d="M0.8 0.8 L4.2 4.2 M4.2 1.6 V4.2 H1.6" stroke="#888" stroke-width="0.9"/></svg><div style="left:1058.0px;top:74.0px;width:1.0px;height:55.0px;background:#ebebeb"></div><svg style="left:1067.5px;top:80.4px" width="17.10" height="15.96" viewBox="0 0 15 14" fill="none" stroke-linecap="round" stroke-linejoin="round"><rect x="1" y="1" width="3.6" height="3.6" stroke="#555" stroke-width="1"/><rect x="6.5" y="1" width="7.5" height="3.6" rx="0.8" stroke="#555" stroke-width="1"/><rect x="1" y="6.5" width="3.6" height="6.5" rx="0.8" stroke="#555" stroke-width="1"/></svg><span class="t" style="left:1088.0px;top:78.4px;">行和列</span><svg style="left:1123.4px;top:86.4px" width="7.00" height="5.00" viewBox="0 0 7 5" fill="none" stroke-linecap="round" stroke-linejoin="round"><path d="M1.3 1.2 L3.5 3.4 L5.7 1.2" stroke="#444" stroke-width="1.5"/></svg><svg style="left:1067.5px;top:105.6px" width="17.10" height="15.96" viewBox="0 0 15 14" fill="none" stroke-linecap="round" stroke-linejoin="round"><rect x="1" y="1" width="13" height="10" rx="1" stroke="#555" stroke-width="1.1"/><path d="M1 4.2 H14 M5 1 V11" stroke="#555" stroke-width="1"/><path d="M1.5 13.2 H7" stroke="#2a9d6a" stroke-width="1.2"/></svg><span class="t" style="left:1088.0px;top:103.6px;">工作表</span><svg style="left:1123.4px;top:111.6px" width="7.00" height="5.00" viewBox="0 0 7 5" fill="none" stroke-linecap="round" stroke-linejoin="round"><path d="M1.3 1.2 L3.5 3.4 L5.7 1.2" stroke="#444" stroke-width="1.5"/></svg><div style="left:1142.7px;top:74.0px;width:1.0px;height:55.0px;background:#ebebeb"></div><svg style="left:1170.3px;top:79.3px" width="20.00" height="20.00" viewBox="0 0 20 20" fill="none" stroke-linecap="round" stroke-linejoin="round"><rect x="1.5" y="1.5" width="17" height="17" rx="1.5" stroke="#555" stroke-width="1.15"/><path d="M1.5 7 H18.5 M1.5 13 H18.5 M6.5 1.5 V18.5 M13.5 1.5 V18.5" stroke="#555" stroke-width="1"/><rect x="6.5" y="5" width="7" height="6" fill="#fff" stroke="#555" stroke-width="1.15"/></svg><span class="t" style="left:1154.0px;top:103.6px;">条件格式</span><svg style="left:1199.4px;top:111.6px" width="7.00" height="5.00" viewBox="0 0 7 5" fill="none" stroke-linecap="round" stroke-linejoin="round"><path d="M1.3 1.2 L3.5 3.4 L5.7 1.2" stroke="#444" stroke-width="1.5"/></svg><svg style="left:1215.8px;top:79.9px" width="17.10" height="15.96" viewBox="0 0 15 14" fill="none" stroke-linecap="round" stroke-linejoin="round"><rect x="1" y="1" width="10" height="8" rx="0.8" stroke="#555" stroke-width="1"/><path d="M1 4 H11 M5 1 V9" stroke="#555" stroke-width="0.9"/><path d="M13.5 4.5 L8 11 L6 12.5 L6.8 10 L12.3 3.5Z" stroke="#d98a3a" stroke-width="1" fill="#fff"/></svg><svg style="left:1235.1px;top:86.4px" width="7.00" height="5.00" viewBox="0 0 7 5" fill="none" stroke-linecap="round" stroke-linejoin="round"><path d="M1.3 1.2 L3.5 3.4 L5.7 1.2" stroke="#444" stroke-width="1.5"/></svg><svg style="left:1215.7px;top:105.7px" width="15.75" height="15.75" viewBox="0 0 15 15" fill="none" stroke-linecap="round" stroke-linejoin="round"><path d="M4 1 V14 M11 1 V14 M1 4 H14 M1 11 H14" stroke="#555" stroke-width="1.25"/></svg><svg style="left:1235.1px;top:111.6px" width="7.00" height="5.00" viewBox="0 0 7 5" fill="none" stroke-linecap="round" stroke-linejoin="round"><path d="M1.3 1.2 L3.5 3.4 L5.7 1.2" stroke="#444" stroke-width="1.5"/></svg><div style="left:1253.6px;top:74.0px;width:1.0px;height:55.0px;background:#ebebeb"></div><svg style="left:1264.5px;top:80.4px" width="15.96" height="15.96" viewBox="0 0 14 14" fill="none" stroke-linecap="round" stroke-linejoin="round"><rect x="1" y="1" width="12" height="12" rx="1.2" stroke="#555" stroke-width="1.1"/><path d="M7 3.5 V9.5 M4.5 7.2 L7 9.7 L9.5 7.2" stroke="#555" stroke-width="1.1"/></svg><span class="t" style="left:1284.5px;top:78.4px;">填充</span><svg style="left:1308.8px;top:86.4px" width="7.00" height="5.00" viewBox="0 0 7 5" fill="none" stroke-linecap="round" stroke-linejoin="round"><path d="M1.3 1.2 L3.5 3.4 L5.7 1.2" stroke="#444" stroke-width="1.5"/></svg><svg style="left:1265.1px;top:105.6px" width="14.82" height="15.96" viewBox="0 0 13 14" fill="none" stroke-linecap="round" stroke-linejoin="round"><path d="M11.5 3.5 V1.5 H1.8 L7 7 L1.8 12.5 H11.5 V10.5" stroke="#555" stroke-width="1.2"/></svg><span class="t" style="left:1284.5px;top:103.6px;">求和</span><svg style="left:1308.8px;top:111.6px" width="7.00" height="5.00" viewBox="0 0 7 5" fill="none" stroke-linecap="round" stroke-linejoin="round"><path d="M1.3 1.2 L3.5 3.4 L5.7 1.2" stroke="#444" stroke-width="1.5"/></svg><span class="t" style="left:1324.5px;top:77.9px;width:12px;text-align:center;font-size:12px;color:#555">A</span><div style="left:1326.5px;top:94.0px;width:7.0px;height:1.0px;background:#555"></div><svg style="left:1335.5px;top:81.9px" width="6.00" height="13.00" viewBox="0 0 6 13" fill="none" stroke-linecap="round" stroke-linejoin="round"><path d="M3 1 V11.5 M0.8 9.3 L3 11.5 L5.2 9.3" stroke="#3f78c8" stroke-width="1.1"/></svg><span class="t" style="left:1345.8px;top:78.4px;">排序</span><svg style="left:1370.5px;top:86.4px" width="7.00" height="5.00" viewBox="0 0 7 5" fill="none" stroke-linecap="round" stroke-linejoin="round"><path d="M1.3 1.2 L3.5 3.4 L5.7 1.2" stroke="#444" stroke-width="1.5"/></svg><div style="left:1322.5px;top:102.3px;width:59.2px;height:21.2px;box-sizing:border-box;background:#fff;border:1px solid #e0e0e0;border-radius:3.5px"></div><div style="left:1322.5px;top:102.3px;width:46.2px;height:21.2px;background:#ebebeb;border-radius:3.5px 0 0 3.5px"></div><svg style="left:1326.5px;top:105.6px" width="15.96" height="15.96" viewBox="0 0 14 14" fill="none" stroke-linecap="round" stroke-linejoin="round"><path d="M1.5 1.5 H12.5 L8.5 7 V11 L5.5 12.8 V7Z" stroke="#555" stroke-width="1.1"/></svg><span class="t" style="left:1345.8px;top:103.6px;">筛选</span><svg style="left:1371.3px;top:111.6px" width="7.00" height="5.00" viewBox="0 0 7 5" fill="none" stroke-linecap="round" stroke-linejoin="round"><path d="M1.3 1.2 L3.5 3.4 L5.7 1.2" stroke="#444" stroke-width="1.5"/></svg><svg style="left:1387.4px;top:80.4px" width="17.10" height="15.96" viewBox="0 0 15 14" fill="none" stroke-linecap="round" stroke-linejoin="round"><rect x="1" y="1" width="13" height="12" rx="1.2" stroke="#555" stroke-width="1.1"/><path d="M1 5 H14 M1 9 H5.3 M9.6 5 V13" stroke="#555" stroke-width="1"/><path d="M5.3 1 V13 M5.3 9 H14" stroke="#2a9d6a" stroke-width="1.1" stroke-dasharray="1.6 1.1"/></svg><span class="t" style="left:1407.0px;top:78.4px;">冻结</span><svg style="left:1431.9px;top:86.4px" width="7.00" height="5.00" viewBox="0 0 7 5" fill="none" stroke-linecap="round" stroke-linejoin="round"><path d="M1.3 1.2 L3.5 3.4 L5.7 1.2" stroke="#444" stroke-width="1.5"/></svg><svg style="left:1387.9px;top:105.6px" width="15.96" height="15.96" viewBox="0 0 14 14" fill="none" stroke-linecap="round" stroke-linejoin="round"><circle cx="5.8" cy="5.8" r="4.3" stroke="#555" stroke-width="1.2"/><path d="M9 9 L12.8 12.8" stroke="#555" stroke-width="1.3"/></svg><span class="t" style="left:1407.0px;top:103.6px;">查找</span><svg style="left:1431.9px;top:111.6px" width="7.00" height="5.00" viewBox="0 0 7 5" fill="none" stroke-linecap="round" stroke-linejoin="round"><path d="M1.3 1.2 L3.5 3.4 L5.7 1.2" stroke="#444" stroke-width="1.5"/></svg><div style="left:1452.0px;top:74.0px;width:1.0px;height:55.0px;background:#ebebeb"></div><svg style="left:1489.7px;top:82.1px" width="20.52" height="14.82" viewBox="0 0 18 13" fill="none" stroke-linecap="round" stroke-linejoin="round"><path d="M5 11.5 Q1.2 11.5 1.2 8.3 Q1.2 5.5 4.3 5.2 Q5 1.5 8.7 1.5 Q12 1.5 12.9 4.6 Q16.5 4.8 16.5 8.2 Q16.5 11.5 13 11.5Z" stroke="#3aa0d8" stroke-width="1.3"/><path d="M9 6 Q12.5 6.5 11.8 9.5 Q10.5 11.5 8.5 10" stroke="#e04a4a" stroke-width="1.2"/></svg><span class="t" style="left:1400.7px;top:103.6px;width:200px;text-align:center;">保存到天翼云盘</span><div style="left:11.5px;top:142.0px;width:145.5px;height:23.0px;background:#fff;border-radius:5px"></div><span class="t" style="left:45.8px;top:144.0px;width:60px;text-align:center;font-size:11.6px;font-family:Liberation Serif,serif;color:#444;letter-spacing:.4px">E25</span><svg style="left:143.5px;top:151.8px" width="7.00" height="5.00" viewBox="0 0 7 5" fill="none" stroke-linecap="round" stroke-linejoin="round"><path d="M1.3 1.2 L3.5 3.4 L5.7 1.2" stroke="#777" stroke-width="1.5"/></svg><div style="left:166.5px;top:142.0px;width:1681.5px;height:23.0px;background:#fff;border-radius:5px"></div><svg style="left:187.5px;top:147.0px" width="13.00" height="13.00" viewBox="0 0 13 13" fill="none" stroke-linecap="round" stroke-linejoin="round"><circle cx="5.8" cy="5.8" r="4.3" stroke="#666" stroke-width="1.1"/><path d="M9 9 L12 12 M3.8 5.8 H7.8" stroke="#666" stroke-width="1.1"/></svg><span class="t" style="left:206.5px;top:143.5px;width:30px;text-align:center;font-size:12.5px;font-family:Liberation Serif,serif;font-style:italic;color:#444"><i>f</i>x</span><div style="left:240.0px;top:146.5px;width:1.0px;height:14.0px;background:#e2e2e2"></div><div style="left:0.0px;top:166.0px;width:1845.3px;height:793.2px;background:#fff"></div><div style="left:0.0px;top:166.0px;width:1845.3px;height:26.4px;background:#efefef"></div><div style="left:0.0px;top:192.4px;width:32.0px;height:766.8px;background:#efefef"></div><div style="left:1845.3px;top:166.0px;width:14.7px;height:793.2px;background:#efefef"></div><div style="left:1845.3px;top:192.4px;width:14.7px;height:766.8px;background:#e8e8e8"></div><div style="left:484.4px;top:171.5px;width:38.0px;height:21.0px;background:#dadada"></div><div style="left:484.4px;top:190.6px;width:38.0px;height:2.0px;background:#1e8a5e"></div><div style="left:0.0px;top:350.2px;width:32.0px;height:26.2px;background:#dadada"></div><div style="left:30.6px;top:350.2px;width:1.6px;height:26.2px;background:#1e8a5e"></div><div style="left:95.5px;top:192.4px;width:1.0px;height:766.8px;background:#ebebeb"></div><div style="left:95.5px;top:173.0px;width:1.0px;height:19.0px;background:#e2e2e2"></div><div style="left:181.5px;top:192.4px;width:1.0px;height:766.8px;background:#ebebeb"></div><div style="left:181.5px;top:173.0px;width:1.0px;height:19.0px;background:#e2e2e2"></div><div style="left:409.1px;top:192.4px;width:1.0px;height:766.8px;background:#ebebeb"></div><div style="left:409.1px;top:173.0px;width:1.0px;height:19.0px;background:#e2e2e2"></div><div style="left:483.9px;top:192.4px;width:1.0px;height:766.8px;background:#ebebeb"></div><div style="left:483.9px;top:173.0px;width:1.0px;height:19.0px;background:#e2e2e2"></div><div style="left:521.9px;top:192.4px;width:1.0px;height:766.8px;background:#ebebeb"></div><div style="left:521.9px;top:173.0px;width:1.0px;height:19.0px;background:#e2e2e2"></div><div style="left:604.4px;top:192.4px;width:1.0px;height:766.8px;background:#ebebeb"></div><div style="left:604.4px;top:173.0px;width:1.0px;height:19.0px;background:#e2e2e2"></div><div style="left:669.0px;top:192.4px;width:1.0px;height:766.8px;background:#ebebeb"></div><div style="left:669.0px;top:173.0px;width:1.0px;height:19.0px;background:#e2e2e2"></div><div style="left:734.2px;top:192.4px;width:1.0px;height:766.8px;background:#ebebeb"></div><div style="left:734.2px;top:173.0px;width:1.0px;height:19.0px;background:#e2e2e2"></div><div style="left:785.2px;top:192.4px;width:1.0px;height:766.8px;background:#ebebeb"></div><div style="left:785.2px;top:173.0px;width:1.0px;height:19.0px;background:#e2e2e2"></div><div style="left:836.8px;top:192.4px;width:1.0px;height:766.8px;background:#ebebeb"></div><div style="left:836.8px;top:173.0px;width:1.0px;height:19.0px;background:#e2e2e2"></div><div style="left:886.1px;top:192.4px;width:1.0px;height:766.8px;background:#ebebeb"></div><div style="left:886.1px;top:173.0px;width:1.0px;height:19.0px;background:#e2e2e2"></div><div style="left:927.9px;top:192.4px;width:1.0px;height:766.8px;background:#ebebeb"></div><div style="left:927.9px;top:173.0px;width:1.0px;height:19.0px;background:#e2e2e2"></div><div style="left:992.6px;top:192.4px;width:1.0px;height:766.8px;background:#ebebeb"></div><div style="left:992.6px;top:173.0px;width:1.0px;height:19.0px;background:#e2e2e2"></div><div style="left:1057.3px;top:192.4px;width:1.0px;height:766.8px;background:#ebebeb"></div><div style="left:1057.3px;top:173.0px;width:1.0px;height:19.0px;background:#e2e2e2"></div><div style="left:1122.1px;top:192.4px;width:1.0px;height:766.8px;background:#ebebeb"></div><div style="left:1122.1px;top:173.0px;width:1.0px;height:19.0px;background:#e2e2e2"></div><div style="left:1186.8px;top:192.4px;width:1.0px;height:766.8px;background:#ebebeb"></div><div style="left:1186.8px;top:173.0px;width:1.0px;height:19.0px;background:#e2e2e2"></div><div style="left:1251.5px;top:192.4px;width:1.0px;height:766.8px;background:#ebebeb"></div><div style="left:1251.5px;top:173.0px;width:1.0px;height:19.0px;background:#e2e2e2"></div><div style="left:1316.2px;top:192.4px;width:1.0px;height:766.8px;background:#ebebeb"></div><div style="left:1316.2px;top:173.0px;width:1.0px;height:19.0px;background:#e2e2e2"></div><div style="left:1380.9px;top:192.4px;width:1.0px;height:766.8px;background:#ebebeb"></div><div style="left:1380.9px;top:173.0px;width:1.0px;height:19.0px;background:#e2e2e2"></div><div style="left:1445.7px;top:192.4px;width:1.0px;height:766.8px;background:#ebebeb"></div><div style="left:1445.7px;top:173.0px;width:1.0px;height:19.0px;background:#e2e2e2"></div><div style="left:1510.4px;top:192.4px;width:1.0px;height:766.8px;background:#ebebeb"></div><div style="left:1510.4px;top:173.0px;width:1.0px;height:19.0px;background:#e2e2e2"></div><div style="left:1575.1px;top:192.4px;width:1.0px;height:766.8px;background:#ebebeb"></div><div style="left:1575.1px;top:173.0px;width:1.0px;height:19.0px;background:#e2e2e2"></div><div style="left:1639.8px;top:192.4px;width:1.0px;height:766.8px;background:#ebebeb"></div><div style="left:1639.8px;top:173.0px;width:1.0px;height:19.0px;background:#e2e2e2"></div><div style="left:1704.5px;top:192.4px;width:1.0px;height:766.8px;background:#ebebeb"></div><div style="left:1704.5px;top:173.0px;width:1.0px;height:19.0px;background:#e2e2e2"></div><div style="left:1769.3px;top:192.4px;width:1.0px;height:766.8px;background:#ebebeb"></div><div style="left:1769.3px;top:173.0px;width:1.0px;height:19.0px;background:#e2e2e2"></div><div style="left:1834.0px;top:192.4px;width:1.0px;height:766.8px;background:#ebebeb"></div><div style="left:1834.0px;top:173.0px;width:1.0px;height:19.0px;background:#e2e2e2"></div><div style="left:31.5px;top:192.4px;width:1.0px;height:766.8px;background:#dcdcdc"></div><div style="left:0.0px;top:192.0px;width:1845.3px;height:1.0px;background:#dedede"></div><div style="left:32.0px;top:245.0px;width:1813.3px;height:1.0px;background:#ebebeb"></div><div style="left:0.0px;top:245.0px;width:32.0px;height:1.0px;background:#e0e0e0"></div><div style="left:32.0px;top:271.1px;width:1813.3px;height:1.0px;background:#ebebeb"></div><div style="left:0.0px;top:271.1px;width:32.0px;height:1.0px;background:#e0e0e0"></div><div style="left:32.0px;top:297.3px;width:1813.3px;height:1.0px;background:#ebebeb"></div><div style="left:0.0px;top:297.3px;width:32.0px;height:1.0px;background:#e0e0e0"></div><div style="left:32.0px;top:323.5px;width:1813.3px;height:1.0px;background:#ebebeb"></div><div style="left:0.0px;top:323.5px;width:32.0px;height:1.0px;background:#e0e0e0"></div><div style="left:32.0px;top:349.7px;width:1813.3px;height:1.0px;background:#ebebeb"></div><div style="left:0.0px;top:349.7px;width:32.0px;height:1.0px;background:#e0e0e0"></div><div style="left:32.0px;top:375.8px;width:1813.3px;height:1.0px;background:#ebebeb"></div><div style="left:0.0px;top:375.8px;width:32.0px;height:1.0px;background:#e0e0e0"></div><div style="left:32.0px;top:402.0px;width:1813.3px;height:1.0px;background:#ebebeb"></div><div style="left:0.0px;top:402.0px;width:32.0px;height:1.0px;background:#e0e0e0"></div><div style="left:32.0px;top:428.2px;width:1813.3px;height:1.0px;background:#ebebeb"></div><div style="left:0.0px;top:428.2px;width:32.0px;height:1.0px;background:#e0e0e0"></div><div style="left:32.0px;top:454.3px;width:1813.3px;height:1.0px;background:#ebebeb"></div><div style="left:0.0px;top:454.3px;width:32.0px;height:1.0px;background:#e0e0e0"></div><div style="left:32.0px;top:480.5px;width:1813.3px;height:1.0px;background:#ebebeb"></div><div style="left:0.0px;top:480.5px;width:32.0px;height:1.0px;background:#e0e0e0"></div><div style="left:32.0px;top:506.7px;width:1813.3px;height:1.0px;background:#ebebeb"></div><div style="left:0.0px;top:506.7px;width:32.0px;height:1.0px;background:#e0e0e0"></div><div style="left:32.0px;top:532.8px;width:1813.3px;height:1.0px;background:#ebebeb"></div><div style="left:0.0px;top:532.8px;width:32.0px;height:1.0px;background:#e0e0e0"></div><div style="left:32.0px;top:559.0px;width:1813.3px;height:1.0px;background:#ebebeb"></div><div style="left:0.0px;top:559.0px;width:32.0px;height:1.0px;background:#e0e0e0"></div><div style="left:32.0px;top:585.2px;width:1813.3px;height:1.0px;background:#ebebeb"></div><div style="left:0.0px;top:585.2px;width:32.0px;height:1.0px;background:#e0e0e0"></div><div style="left:32.0px;top:611.3px;width:1813.3px;height:1.0px;background:#ebebeb"></div><div style="left:0.0px;top:611.3px;width:32.0px;height:1.0px;background:#e0e0e0"></div><div style="left:32.0px;top:637.5px;width:1813.3px;height:1.0px;background:#ebebeb"></div><div style="left:0.0px;top:637.5px;width:32.0px;height:1.0px;background:#e0e0e0"></div><div style="left:32.0px;top:663.7px;width:1813.3px;height:1.0px;background:#ebebeb"></div><div style="left:0.0px;top:663.7px;width:32.0px;height:1.0px;background:#e0e0e0"></div><div style="left:32.0px;top:689.9px;width:1813.3px;height:1.0px;background:#ebebeb"></div><div style="left:0.0px;top:689.9px;width:32.0px;height:1.0px;background:#e0e0e0"></div><div style="left:32.0px;top:716.0px;width:1813.3px;height:1.0px;background:#ebebeb"></div><div style="left:0.0px;top:716.0px;width:32.0px;height:1.0px;background:#e0e0e0"></div><div style="left:32.0px;top:742.2px;width:1813.3px;height:1.0px;background:#ebebeb"></div><div style="left:0.0px;top:742.2px;width:32.0px;height:1.0px;background:#e0e0e0"></div><div style="left:32.0px;top:768.4px;width:1813.3px;height:1.0px;background:#ebebeb"></div><div style="left:0.0px;top:768.4px;width:32.0px;height:1.0px;background:#e0e0e0"></div><div style="left:32.0px;top:794.5px;width:1813.3px;height:1.0px;background:#ebebeb"></div><div style="left:0.0px;top:794.5px;width:32.0px;height:1.0px;background:#e0e0e0"></div><div style="left:32.0px;top:820.7px;width:1813.3px;height:1.0px;background:#ebebeb"></div><div style="left:0.0px;top:820.7px;width:32.0px;height:1.0px;background:#e0e0e0"></div><div style="left:32.0px;top:846.9px;width:1813.3px;height:1.0px;background:#ebebeb"></div><div style="left:0.0px;top:846.9px;width:32.0px;height:1.0px;background:#e0e0e0"></div><div style="left:32.0px;top:873.1px;width:1813.3px;height:1.0px;background:#ebebeb"></div><div style="left:0.0px;top:873.1px;width:32.0px;height:1.0px;background:#e0e0e0"></div><div style="left:32.0px;top:899.2px;width:1813.3px;height:1.0px;background:#ebebeb"></div><div style="left:0.0px;top:899.2px;width:32.0px;height:1.0px;background:#e0e0e0"></div><div style="left:32.0px;top:925.4px;width:1813.3px;height:1.0px;background:#ebebeb"></div><div style="left:0.0px;top:925.4px;width:32.0px;height:1.0px;background:#e0e0e0"></div><div style="left:32.0px;top:951.6px;width:1813.3px;height:1.0px;background:#ebebeb"></div><div style="left:0.0px;top:951.6px;width:32.0px;height:1.0px;background:#e0e0e0"></div><div style="left:0.0px;top:218.3px;width:1845.3px;height:2.2px;background:#cacaca"></div><div style="left:95.2px;top:192.6px;width:1.9px;height:766.6px;background:#222"></div><div style="left:927.5px;top:192.6px;width:1.9px;height:766.6px;background:#222"></div><span class="ch" style="left:32.0px;top:172.3px;width:64.0px;">A</span><span class="ch" style="left:96.0px;top:172.3px;width:86.0px;">B</span><span class="ch" style="left:182.0px;top:172.3px;width:227.6px;">C</span><span class="ch" style="left:409.6px;top:172.3px;width:74.8px;">D</span><span class="ch" style="left:484.4px;top:172.3px;width:38.0px;color:#1e8a5e">E</span><span class="ch" style="left:522.4px;top:172.3px;width:82.5px;">F</span><span class="ch" style="left:604.9px;top:172.3px;width:64.6px;">G</span><span class="ch" style="left:669.5px;top:172.3px;width:65.2px;">H</span><span class="ch" style="left:734.7px;top:172.3px;width:51.0px;">I</span><span class="ch" style="left:785.7px;top:172.3px;width:51.6px;">J</span><span class="ch" style="left:837.3px;top:172.3px;width:49.3px;">K</span><span class="ch" style="left:886.6px;top:172.3px;width:41.8px;">L</span><span class="ch" style="left:928.4px;top:172.3px;width:64.7px;">M</span><span class="ch" style="left:993.1px;top:172.3px;width:64.7px;">N</span><span class="ch" style="left:1057.8px;top:172.3px;width:64.7px;">O</span><span class="ch" style="left:1122.6px;top:172.3px;width:64.7px;">P</span><span class="ch" style="left:1187.3px;top:172.3px;width:64.7px;">Q</span><span class="ch" style="left:1252.0px;top:172.3px;width:64.7px;">R</span><span class="ch" style="left:1316.7px;top:172.3px;width:64.7px;">S</span><span class="ch" style="left:1381.4px;top:172.3px;width:64.7px;">T</span><span class="ch" style="left:1446.2px;top:172.3px;width:64.7px;">U</span><span class="ch" style="left:1510.9px;top:172.3px;width:64.7px;">V</span><span class="ch" style="left:1575.6px;top:172.3px;width:64.7px;">W</span><span class="ch" style="left:1640.3px;top:172.3px;width:64.7px;">X</span><span class="ch" style="left:1705.0px;top:172.3px;width:64.7px;">Y</span><span class="ch" style="left:1769.8px;top:172.3px;width:64.7px;">Z</span><svg style="left:12.0px;top:182.0px" width="7.00" height="7.00" viewBox="0 0 7 7" fill="none" stroke-linecap="round" stroke-linejoin="round"><path d="M6 1 V6 H1Z" fill="#777"/></svg><span class="rh" style="top:195.8px">1</span><span class="rh" style="top:222.7px;">20</span><span class="rh" style="top:248.9px;">21</span><span class="rh" style="top:275.0px;">22</span><span class="rh" style="top:301.2px;">23</span><span class="rh" style="top:327.4px;">24</span><span class="rh" style="top:353.5px;color:#1e8a5e">25</span><span class="rh" style="top:379.7px;">26</span><span class="rh" style="top:405.9px;">27</span><span class="rh" style="top:432.0px;">28</span><span class="rh" style="top:458.2px;">29</span><span class="rh" style="top:484.4px;">30</span><span class="rh" style="top:510.6px;">31</span><span class="rh" style="top:536.7px;">32</span><span class="rh" style="top:562.9px;">33</span><span class="rh" style="top:589.1px;">34</span><span class="rh" style="top:615.2px;">35</span><span class="rh" style="top:641.4px;">36</span><span class="rh" style="top:667.6px;">37</span><span class="rh" style="top:693.7px;">38</span><span class="rh" style="top:719.9px;">39</span><span class="rh" style="top:746.1px;">40</span><span class="rh" style="top:772.3px;">41</span><span class="rh" style="top:798.4px;">42</span><span class="rh" style="top:824.6px;">43</span><span class="rh" style="top:850.8px;">44</span><span class="rh" style="top:876.9px;">45</span><span class="rh" style="top:903.1px;">46</span><span class="rh" style="top:929.3px;">47</span><span class="c" style="left:32.0px;top:195.8px;width:64.0px;">123.00</span><span class="c" style="left:96.0px;top:195.8px;width:86.0px;">日期</span><span class="c" style="left:182.0px;top:195.8px;width:227.6px;">内容</span><span class="c" style="left:409.6px;top:195.8px;width:74.8px;">金额</span><span class="c" style="left:522.4px;top:195.8px;width:82.5px;font-family:Liberation Serif,Noto Serif CJK SC,serif;font-size:13.5px;">Ⅲ</span><span class="c" style="left:604.9px;top:195.8px;width:64.6px;font-family:Liberation Serif,Noto Serif CJK SC,serif;font-size:13.5px;">Ⅱ</span><span class="c" style="left:669.5px;top:195.8px;width:65.2px;font-family:Liberation Serif,Noto Serif CJK SC,serif;font-size:13.5px;">Ⅰ</span><span class="c" style="left:734.7px;top:195.8px;width:51.0px;">年度</span><span class="c" style="left:785.7px;top:195.8px;width:51.6px;">月度</span><span class="c" style="left:837.3px;top:195.8px;width:49.3px;">对账</span><div style="left:484.4px;top:194.0px;width:27.0px;height:24px;overflow:hidden"><span class="c" style="left:6.5px;top:2px;text-align:left">成尸</span></div><div style="left:886.6px;top:194.0px;width:30.0px;height:24px;overflow:hidden"><span class="c" style="left:9px;top:2px;text-align:left">预算</span></div><div style="left:168.5px;top:205.0px;width:12.5px;height:12.5px;box-sizing:border-box;background:#fff;border:1px solid #d8d8d8"></div><svg style="left:171.3px;top:209.8px" width="7.00" height="5.00" viewBox="0 0 7 5" fill="none" stroke-linecap="round" stroke-linejoin="round"><path d="M0.6 0.8 H6.4 L3.5 4.4Z" fill="#1e9a63"/></svg><div style="left:396.1px;top:205.0px;width:12.5px;height:12.5px;box-sizing:border-box;background:#fff;border:1px solid #d8d8d8"></div><svg style="left:398.9px;top:209.8px" width="7.00" height="5.00" viewBox="0 0 7 5" fill="none" stroke-linecap="round" stroke-linejoin="round"><path d="M0.6 0.8 H6.4 L3.5 4.4Z" fill="#1e9a63"/></svg><div style="left:470.9px;top:205.0px;width:12.5px;height:12.5px;box-sizing:border-box;background:#fff;border:1px solid #d8d8d8"></div><svg style="left:473.7px;top:209.8px" width="7.00" height="5.00" viewBox="0 0 7 5" fill="none" stroke-linecap="round" stroke-linejoin="round"><path d="M0.6 0.8 H6.4 L3.5 4.4Z" fill="#1e9a63"/></svg><div style="left:508.9px;top:205.0px;width:12.5px;height:12.5px;box-sizing:border-box;background:#fff;border:1px solid #d8d8d8"></div><svg style="left:511.7px;top:209.8px" width="7.00" height="5.00" viewBox="0 0 7 5" fill="none" stroke-linecap="round" stroke-linejoin="round"><path d="M0.6 0.8 H6.4 L3.5 4.4Z" fill="#1e9a63"/></svg><div style="left:591.4px;top:205.0px;width:12.5px;height:12.5px;box-sizing:border-box;background:#fff;border:1px solid #d8d8d8"></div><svg style="left:594.2px;top:209.8px" width="7.00" height="5.00" viewBox="0 0 7 5" fill="none" stroke-linecap="round" stroke-linejoin="round"><path d="M0.6 0.8 H6.4 L3.5 4.4Z" fill="#1e9a63"/></svg><div style="left:656.0px;top:205.0px;width:12.5px;height:12.5px;box-sizing:border-box;background:#fff;border:1px solid #d8d8d8"></div><svg style="left:658.8px;top:209.8px" width="7.00" height="5.00" viewBox="0 0 7 5" fill="none" stroke-linecap="round" stroke-linejoin="round"><path d="M0.6 0.8 H6.4 L3.5 4.4Z" fill="#1e9a63"/></svg><div style="left:721.2px;top:205.0px;width:12.5px;height:12.5px;box-sizing:border-box;background:#fff;border:1px solid #d8d8d8"></div><svg style="left:724.0px;top:209.8px" width="7.00" height="5.00" viewBox="0 0 7 5" fill="none" stroke-linecap="round" stroke-linejoin="round"><path d="M0.6 0.8 H6.4 L3.5 4.4Z" fill="#1e9a63"/></svg><div style="left:772.2px;top:205.0px;width:12.5px;height:12.5px;box-sizing:border-box;background:#fff;border:1px solid #d8d8d8"></div><svg style="left:775.0px;top:209.8px" width="7.00" height="5.00" viewBox="0 0 7 5" fill="none" stroke-linecap="round" stroke-linejoin="round"><path d="M0.6 0.8 H6.4 L3.5 4.4Z" fill="#1e9a63"/></svg><div style="left:823.8px;top:205.0px;width:12.5px;height:12.5px;box-sizing:border-box;background:#fff;border:1px solid #d8d8d8"></div><svg style="left:826.6px;top:209.8px" width="7.00" height="5.00" viewBox="0 0 7 5" fill="none" stroke-linecap="round" stroke-linejoin="round"><path d="M0.6 0.8 H6.4 L3.5 4.4Z" fill="#1e9a63"/></svg><div style="left:873.1px;top:205.0px;width:12.5px;height:12.5px;box-sizing:border-box;background:#fff;border:1px solid #d8d8d8"></div><svg style="left:875.9px;top:209.8px" width="7.00" height="5.00" viewBox="0 0 7 5" fill="none" stroke-linecap="round" stroke-linejoin="round"><path d="M0.6 0.8 H6.4 L3.5 4.4Z" fill="#1e9a63"/></svg><div style="left:914.9px;top:205.0px;width:12.5px;height:12.5px;box-sizing:border-box;background:#fff;border:1px solid #d8d8d8"></div><svg style="left:917.7px;top:209.8px" width="7.00" height="5.00" viewBox="0 0 7 5" fill="none" stroke-linecap="round" stroke-linejoin="round"><path d="M0.6 0.8 H6.4 L3.5 4.4Z" fill="#1e9a63"/></svg><span class="c" style="left:96.0px;top:222.7px;width:86.0px">2017/11/20</span><span class="c" style="left:182.0px;top:222.7px;width:227.6px">cloudlet.net</span><span class="c" style="left:408.6px;top:222.7px;width:74.8px">2000.00</span><span class="c" style="left:522.4px;top:222.7px;width:82.5px">域名</span><span class="c" style="left:604.9px;top:222.7px;width:64.6px">其他</span><span class="c" style="left:669.5px;top:222.7px;width:65.2px">支出</span><span class="c" style="left:734.7px;top:222.7px;width:51.0px">17</span><span class="c" style="left:785.7px;top:222.7px;width:51.6px">11</span><span class="c" style="left:96.0px;top:248.9px;width:86.0px">2017/11/20</span><span class="c" style="left:182.0px;top:248.9px;width:227.6px">cloudlet.org</span><span class="c" style="left:408.6px;top:248.9px;width:74.8px">2000.00</span><span class="c" style="left:522.4px;top:248.9px;width:82.5px">域名</span><span class="c" style="left:604.9px;top:248.9px;width:64.6px">其他</span><span class="c" style="left:669.5px;top:248.9px;width:65.2px">支出</span><span class="c" style="left:734.7px;top:248.9px;width:51.0px">17</span><span class="c" style="left:785.7px;top:248.9px;width:51.6px">11</span><span class="c" style="left:96.0px;top:275.0px;width:86.0px">2017/11/20</span><span class="c" style="left:182.0px;top:275.0px;width:227.6px">cloudlet.cc</span><span class="c" style="left:408.6px;top:275.0px;width:74.8px">2000.00</span><span class="c" style="left:522.4px;top:275.0px;width:82.5px">域名</span><span class="c" style="left:604.9px;top:275.0px;width:64.6px">其他</span><span class="c" style="left:669.5px;top:275.0px;width:65.2px">支出</span><span class="c" style="left:734.7px;top:275.0px;width:51.0px">17</span><span class="c" style="left:785.7px;top:275.0px;width:51.6px">11</span><span class="c" style="left:408.6px;top:301.2px;width:74.8px">0.00</span><span class="c" style="left:408.6px;top:327.4px;width:74.8px">123.00</span><span class="c" style="left:96.0px;top:484.4px;width:86.0px">2048/1/1</span><span class="c" style="left:408.6px;top:484.4px;width:74.8px">0.00</span><span class="c" style="left:522.4px;top:484.4px;width:82.5px">工资</span><span class="c" style="left:604.9px;top:484.4px;width:64.6px">/</span><span class="c" style="left:669.5px;top:484.4px;width:65.2px">收入</span><span class="c" style="left:734.7px;top:484.4px;width:51.0px">47</span><span class="c" style="left:785.7px;top:484.4px;width:51.6px">13</span><span class="c" style="left:886.6px;top:484.4px;width:41.8px">P</span><span class="c" style="left:96.0px;top:510.6px;width:86.0px">2048/1/1</span><span class="c" style="left:408.6px;top:510.6px;width:74.8px">0.00</span><span class="c" style="left:522.4px;top:510.6px;width:82.5px">现金</span><span class="c" style="left:604.9px;top:510.6px;width:64.6px">/</span><span class="c" style="left:669.5px;top:510.6px;width:65.2px">资产</span><span class="c" style="left:734.7px;top:510.6px;width:51.0px">47</span><span class="c" style="left:785.7px;top:510.6px;width:51.6px">13</span><span class="c" style="left:886.6px;top:510.6px;width:41.8px">P</span><span class="c" style="left:96.0px;top:536.7px;width:86.0px">2048/1/2</span><span class="c" style="left:182.0px;top:536.7px;width:227.6px">cloudlet.info</span><span class="c" style="left:408.6px;top:536.7px;width:74.8px">100000.00</span><span class="c" style="left:522.4px;top:536.7px;width:82.5px">域名</span><span class="c" style="left:604.9px;top:536.7px;width:64.6px">其他</span><span class="c" style="left:669.5px;top:536.7px;width:65.2px">支出</span><span class="c" style="left:734.7px;top:536.7px;width:51.0px">47</span><span class="c" style="left:785.7px;top:536.7px;width:51.6px">13</span><span class="c" style="left:886.6px;top:536.7px;width:41.8px">P</span><span class="c" style="left:96.0px;top:562.9px;width:86.0px">2048/1/2</span><span class="c" style="left:182.0px;top:562.9px;width:227.6px">cloudlet.info</span><span class="c" style="left:408.6px;top:562.9px;width:74.8px">-100000.00</span><span class="c" style="left:522.4px;top:562.9px;width:82.5px">现金</span><span class="c" style="left:604.9px;top:562.9px;width:64.6px">/</span><span class="c" style="left:669.5px;top:562.9px;width:65.2px">资产</span><span class="c" style="left:734.7px;top:562.9px;width:51.0px">47</span><span class="c" style="left:785.7px;top:562.9px;width:51.6px">13</span><span class="c" style="left:886.6px;top:562.9px;width:41.8px">P</span><div style="left:483.6px;top:349.6px;width:39.6px;height:27.6px;box-sizing:border-box;border:2px solid #1b7f55"></div><div style="left:520.0px;top:374.1px;width:4.6px;height:4.6px;background:#1b7f55;border:1px solid #fff;box-sizing:border-box"></div><div style="left:1848.6px;top:198.3px;width:7.4px;height:1.2px;background:#b5b5b5"></div><svg style="left:1848.7px;top:208.5px" width="7.00" height="5.00" viewBox="0 0 7 5" fill="none" stroke-linecap="round" stroke-linejoin="round"><path d="M0.5 4.5 H6.5 L3.5 0.5Z" fill="#777"/></svg><div style="left:1848.3px;top:224.7px;width:7.6px;height:40.0px;background:#c6c6c6;border-radius:4px"></div><svg style="left:1848.7px;top:945.5px" width="7.00" height="5.00" viewBox="0 0 7 5" fill="none" stroke-linecap="round" stroke-linejoin="round"><path d="M0.5 0.5 H6.5 L3.5 4.5Z" fill="#777"/></svg><div style="left:0.0px;top:959.2px;width:1860.0px;height:23.3px;background:#ececec"></div><svg style="left:12.9px;top:966.1px" width="9.00" height="9.00" viewBox="0 0 9 9" fill="none" stroke-linecap="round" stroke-linejoin="round"><path d="M2 1 V8 M7.5 1 L4 4.5 L7.5 8" stroke="#b0b0b0" stroke-width="1.1"/></svg><svg style="left:32.9px;top:966.1px" width="9.00" height="9.00" viewBox="0 0 9 9" fill="none" stroke-linecap="round" stroke-linejoin="round"><path d="M6 1 L2.5 4.5 L6 8" stroke="#b0b0b0" stroke-width="1.1"/></svg><svg style="left:53.3px;top:966.1px" width="9.00" height="9.00" viewBox="0 0 9 9" fill="none" stroke-linecap="round" stroke-linejoin="round"><path d="M3 1 L6.5 4.5 L3 8" stroke="#b0b0b0" stroke-width="1.1"/></svg><svg style="left:72.0px;top:966.1px" width="9.00" height="9.00" viewBox="0 0 9 9" fill="none" stroke-linecap="round" stroke-linejoin="round"><path d="M7 1 V8 M1.5 1 L5 4.5 L1.5 8" stroke="#b0b0b0" stroke-width="1.1"/></svg><div style="left:164.8px;top:959.2px;width:56.4px;height:22.0px;background:#fff;border-radius:0 0 5px 5px"></div><span class="t" style="left:27.4px;top:960.6px;width:200px;text-align:center;font-size:11.8px;color:#444">Accounts</span><span class="t" style="left:92.8px;top:960.0px;width:200px;text-align:center;font-size:11.6px;font-weight:bold;color:#1e8a5e">Ledger</span><span class="t" style="left:152.3px;top:960.6px;width:200px;text-align:center;font-size:11.8px;color:#444">Reports</span><span class="t" style="left:217.3px;top:960.6px;width:200px;text-align:center;font-size:11.8px;color:#444">Expense</span><span class="t" style="left:281.0px;top:960.6px;width:200px;text-align:center;font-size:11.8px;color:#444">Income</span><span class="t" style="left:352.0px;top:960.6px;width:200px;text-align:center;font-size:11.8px;color:#444">AssetsFlow</span><span class="t" style="left:421.7px;top:960.6px;width:200px;text-align:center;font-size:11.8px;color:#444">Budget</span><span class="t" style="left:478.6px;top:960.6px;width:200px;text-align:center;font-size:11.8px;color:#444">Check</span><div style="left:283.8px;top:964.0px;width:1.0px;height:13.0px;background:#d8d8d8"></div><div style="left:349.0px;top:964.0px;width:1.0px;height:13.0px;background:#d8d8d8"></div><div style="left:411.0px;top:964.0px;width:1.0px;height:13.0px;background:#d8d8d8"></div><div style="left:491.5px;top:964.0px;width:1.0px;height:13.0px;background:#d8d8d8"></div><div style="left:551.4px;top:964.0px;width:1.0px;height:13.0px;background:#d8d8d8"></div><div style="left:605.0px;top:964.0px;width:1.0px;height:13.0px;background:#d8d8d8"></div><svg style="left:611.0px;top:965.6px" width="10.00" height="10.00" viewBox="0 0 10 10" fill="none" stroke-linecap="round" stroke-linejoin="round"><path d="M5 1 V9 M1 5 H9" stroke="#333" stroke-width="1.5"/></svg><div style="left:1100.5px;top:966.5px;width:1.0px;height:8.0px;background:#aaa"></div><svg style="left:1114.3px;top:966.9px" width="5.00" height="7.00" viewBox="0 0 5 7" fill="none" stroke-linecap="round" stroke-linejoin="round"><path d="M4.5 0.5 V6.5 L0.5 3.5Z" fill="#777"/></svg><div style="left:1128.0px;top:967.4px;width:644.6px;height:6.2px;background:#c9c9c9;border-radius:3px"></div><svg style="left:1824.5px;top:966.9px" width="5.00" height="7.00" viewBox="0 0 5 7" fill="none" stroke-linecap="round" stroke-linejoin="round"><path d="M0.5 0.5 V6.5 L4.5 3.5Z" fill="#777"/></svg><div style="left:1840.3px;top:966.5px;width:1.0px;height:8.0px;background:#aaa"></div><div style="left:0.0px;top:982.5px;width:1860.0px;height:21.5px;background:#e5e5e5"></div><svg style="left:14.5px;top:987.6px" width="13.00" height="12.00" viewBox="0 0 13 12" fill="none" stroke-linecap="round" stroke-linejoin="round"><path d="M1.5 1.5 V5 H4.5 V1.5 M6.5 1.5 H11.5 V4.5 H8 M8 1.5 V7 M2 8 V11 H9 V8.5" stroke="#555" stroke-width="1.1"/></svg><svg style="left:44.9px;top:987.6px" width="13.00" height="12.00" viewBox="0 0 13 12" fill="none" stroke-linecap="round" stroke-linejoin="round"><path d="M11.5 4 V2.5 Q11.5 1.2 10.2 1.2 H2.8 Q1.5 1.2 1.5 2.5 V9.5 Q1.5 10.8 2.8 10.8 H4.5 M6.5 5.5 H12 M6.5 8 H12 M6.5 10.5 H12" stroke="#555" stroke-width="1.1"/></svg><svg style="left:1403.5px;top:987.1px" width="14.00" height="13.00" viewBox="0 0 14 13" fill="none" stroke-linecap="round" stroke-linejoin="round"><rect x="1" y="1" width="12" height="10.5" rx="1" stroke="#555" stroke-width="1.1"/><path d="M1 4.3 H13 M1 7.6 H8 M5 1 V11.5" stroke="#555" stroke-width="1"/><circle cx="10.5" cy="10" r="2.4" stroke="#555" stroke-width="1" fill="#e5e5e5"/></svg><svg style="left:1432.5px;top:988.6px" width="15.00" height="10.00" viewBox="0 0 15 10" fill="none" stroke-linecap="round" stroke-linejoin="round"><path d="M1 5 Q7.5 -2 14 5 Q7.5 12 1 5Z" stroke="#555" stroke-width="1.1"/><circle cx="7.5" cy="5" r="2" stroke="#555" stroke-width="1.1"/></svg><svg style="left:1464.5px;top:987.1px" width="13.00" height="13.00" viewBox="0 0 13 13" fill="none" stroke-linecap="round" stroke-linejoin="round"><rect x="4" y="4" width="5" height="5" stroke="#555" stroke-width="1"/><path d="M6.5 4 V1 M6.5 9 V12 M4 6.5 H1 M9 6.5 H12 M5.3 2 L6.5 0.8 L7.7 2 M5.3 11 L6.5 12.2 L7.7 11 M2 5.3 L0.8 6.5 L2 7.7 M11 5.3 L12.2 6.5 L11 7.7" stroke="#555" stroke-width="0.9"/></svg><svg style="left:1481.0px;top:991.6px" width="7.00" height="5.00" viewBox="0 0 7 5" fill="none" stroke-linecap="round" stroke-linejoin="round"><path d="M1.3 1.2 L3.5 3.4 L5.7 1.2" stroke="#444" stroke-width="1.5"/></svg><div style="left:1496.5px;top:987.0px;width:1.0px;height:13.0px;background:#d2d2d2"></div><div style="left:1509.5px;top:984.0px;width:19.5px;height:19.5px;background:#d4d4d4;border-radius:2px"></div><svg style="left:1512.5px;top:987.6px" width="13.00" height="12.00" viewBox="0 0 13 12" fill="none" stroke-linecap="round" stroke-linejoin="round"><rect x="1" y="1" width="11" height="10" rx="1" stroke="#555" stroke-width="1.1"/><path d="M1 4.3 H12 M4.5 1 V11" stroke="#555" stroke-width="1"/></svg><svg style="left:1541.5px;top:987.6px" width="13.00" height="12.00" viewBox="0 0 13 12" fill="none" stroke-linecap="round" stroke-linejoin="round"><rect x="1" y="1" width="11" height="10" rx="1" stroke="#555" stroke-width="1.1"/><path d="M6.5 1 V11" stroke="#555" stroke-width="1"/></svg><svg style="left:1571.0px;top:987.6px" width="13.00" height="12.00" viewBox="0 0 13 12" fill="none" stroke-linecap="round" stroke-linejoin="round"><rect x="1" y="1" width="10" height="7.5" rx="1" stroke="#555" stroke-width="1.1"/><path d="M3 11 H12 V4" stroke="#555" stroke-width="1"/></svg><div style="left:1596.5px;top:987.0px;width:1.0px;height:13.0px;background:#d2d2d2"></div><span class="t" style="left:1599.6px;top:983.6px;width:50px;text-align:center;font-size:11px;color:#444">100%</span><svg style="left:1648.5px;top:991.6px" width="7.00" height="5.00" viewBox="0 0 7 5" fill="none" stroke-linecap="round" stroke-linejoin="round"><path d="M1.3 1.2 L3.5 3.4 L5.7 1.2" stroke="#444" stroke-width="1.5"/></svg><div style="left:1671.5px;top:992.2px;width:10.5px;height:1.8px;background:#444"></div><div style="left:1695.0px;top:992.0px;width:44.0px;height:2.0px;background:#4d7ab8"></div><div style="left:1738.3px;top:975.3px;width:114.7px;height:27.2px;background:#fff;border-radius:6px;box-shadow:0 0 2px rgba(0,0,0,.10)"></div><svg style="left:1744.7px;top:981.0px" width="20.00" height="16.00" viewBox="0 0 20 16" fill="none" stroke-linecap="round" stroke-linejoin="round"><path d="M17 3.2 Q10 0.5 5 3 Q1.5 5.5 6 7.6 L13 9.5 Q17.5 11.5 13 13.5 Q8 15.5 2.5 12.8" stroke="#f07818" stroke-width="3"/></svg><div style="left:1770.2px;top:980.0px;width:1.0px;height:18.0px;background:#e6e6e6"></div><span class="t" style="left:1774.2px;top:980.6px;width:24px;text-align:center;font-size:16px;font-weight:500;color:#222">中</span><svg style="left:1807.0px;top:981.3px" width="14.00" height="15.00" viewBox="0 0 14 15" fill="none" stroke-linecap="round" stroke-linejoin="round"><path d="M6.5 1.2 Q10.5 6 5.5 11 Q3.5 12.6 1.2 12.6 Q5 15 9.5 12.5 Q14 9 12 4.5 Q10 1.5 6.5 1.2Z" stroke="#222" stroke-width="1.2"/></svg><svg style="left:1833.0px;top:981.5px" width="10.00" height="14.00" viewBox="0 0 10 14" fill="none" stroke-linecap="round" stroke-linejoin="round"><circle cx="3" cy="3.5" r="1.9" stroke="#222" stroke-width="1.1"/><path d="M7.2 8.5 Q9 9.5 7.5 12.5" stroke="#222" stroke-width="1.6"/></svg></div>
</body></html>
